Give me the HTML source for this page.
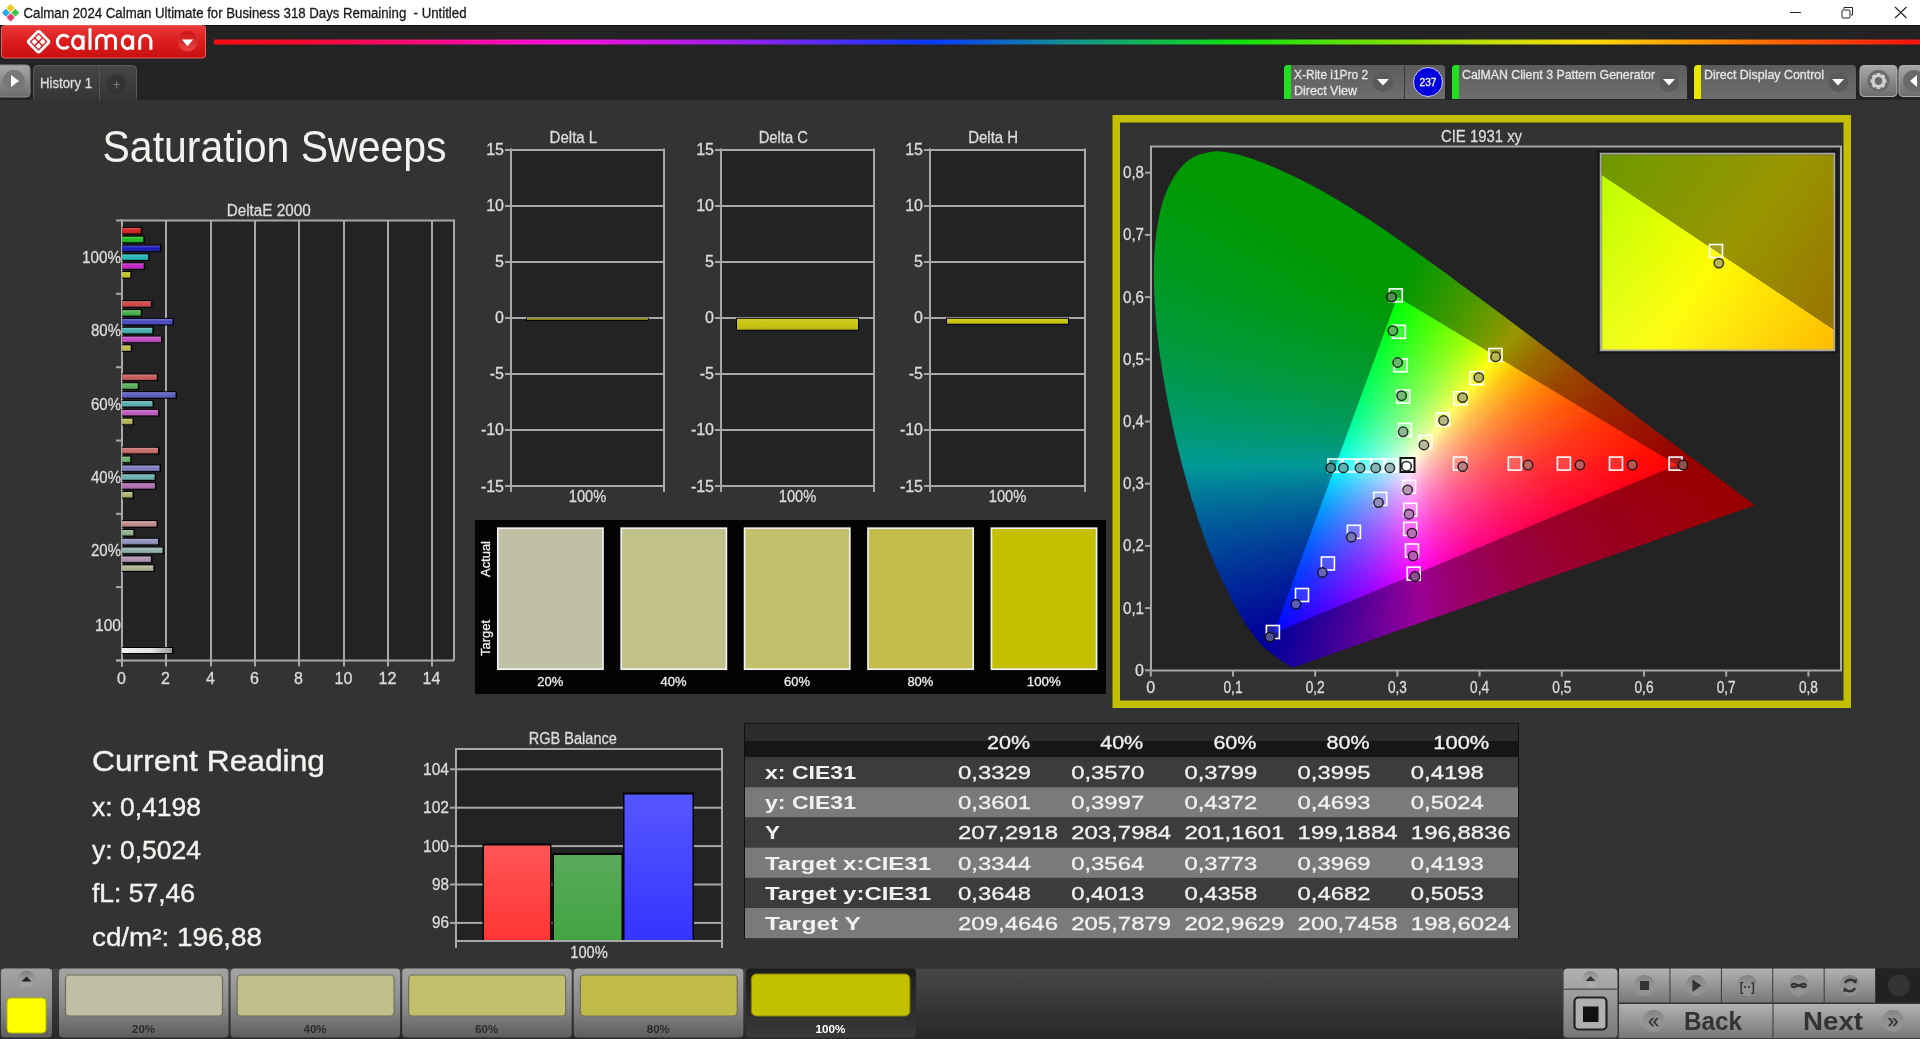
<!DOCTYPE html><html><head><meta charset="utf-8"><title>Calman</title><style>
html,body{margin:0;padding:0;background:#333;overflow:hidden;width:1920px;height:1039px;position:relative}
svg{position:absolute;left:0;top:0;font-family:"Liberation Sans", sans-serif;will-change:transform}
.L{position:absolute;left:0;top:0;width:1920px;height:1039px}
.r{position:absolute;height:3px}
</style></head><body>
<svg width="1920" height="1039" viewBox="0 0 1920 1039">
<defs>
<linearGradient id="rainbow" x1="0" x2="1" y1="0" y2="0"><stop offset="0" stop-color="#ff0a10"/><stop offset="0.06" stop-color="#ff0838"/><stop offset="0.2" stop-color="#ff10d8"/><stop offset="0.3" stop-color="#a020e8"/><stop offset="0.42" stop-color="#0838ff"/><stop offset="0.5" stop-color="#159090"/><stop offset="0.6" stop-color="#10e010"/><stop offset="0.73" stop-color="#b0e000"/><stop offset="0.81" stop-color="#ffd800"/><stop offset="0.89" stop-color="#ff8000"/><stop offset="1" stop-color="#ff1010"/></linearGradient>
<linearGradient id="redlogo" x1="0" x2="0" y1="0" y2="1"><stop offset="0" stop-color="#e83a3a"/><stop offset="0.5" stop-color="#dd1c1c"/><stop offset="1" stop-color="#c81010"/></linearGradient>
<linearGradient id="devbtn" x1="0" x2="0" y1="0" y2="1"><stop offset="0" stop-color="#5c5c5c"/><stop offset="1" stop-color="#6e6e6e"/></linearGradient>
<linearGradient id="gbtn" x1="0" x2="0" y1="0" y2="1"><stop offset="0" stop-color="#a8a8a8"/><stop offset="1" stop-color="#6c6c6c"/></linearGradient>
<linearGradient id="gbtn2" x1="0" x2="0" y1="0" y2="1"><stop offset="0" stop-color="#b4b4b4"/><stop offset="1" stop-color="#7a7a7a"/></linearGradient>
<linearGradient id="selbtn" x1="0" x2="0" y1="0" y2="1"><stop offset="0" stop-color="#1c1c1c"/><stop offset="1" stop-color="#3a3a3a"/></linearGradient>
<linearGradient id="barR" x1="0" x2="0" y1="0" y2="1"><stop offset="0" stop-color="#ff5656"/><stop offset="1" stop-color="#ff3434"/></linearGradient>
<linearGradient id="barG" x1="0" x2="0" y1="0" y2="1"><stop offset="0" stop-color="#5aaa5a"/><stop offset="1" stop-color="#42a442"/></linearGradient>
<linearGradient id="barB" x1="0" x2="0" y1="0" y2="1"><stop offset="0" stop-color="#5656ff"/><stop offset="1" stop-color="#3434ff"/></linearGradient>
<linearGradient id="shine" x1="0" x2="0" y1="0" y2="1"><stop offset="0" stop-color="#fff" stop-opacity="0.25"/><stop offset="0.5" stop-color="#fff" stop-opacity="0"/><stop offset="1" stop-color="#000" stop-opacity="0.25"/></linearGradient>
</defs>
<rect x="0" y="0" width="1920" height="25" fill="#ffffff"/>
<rect x="0" y="25" width="1920" height="75" fill="#232323"/>
<rect x="0" y="25" width="1920" height="1" fill="#101010"/>
<text x="23.5" y="18" font-size="14" fill="#1a1a1a" textLength="443" lengthAdjust="spacingAndGlyphs" stroke="#1a1a1a" stroke-width="0.3">Calman 2024 Calman Ultimate for Business 318 Days Remaining  - Untitled</text>
<g transform="translate(10.6,12.7) rotate(45)"><rect x="-6.2" y="-6.2" width="5.8" height="5.8" rx="0.8" fill="#f5c518"/><rect x="0.4" y="-6.2" width="5.8" height="5.8" rx="0.8" fill="#3cc84a"/><rect x="-6.2" y="0.4" width="5.8" height="5.8" rx="0.8" fill="#2aa6e8"/><rect x="0.4" y="0.4" width="5.8" height="5.8" rx="0.8" fill="#e8406e"/></g>
<rect x="1790" y="12" width="11" height="1" fill="#222"/>
<rect x="1842" y="10" width="8" height="8" fill="none" stroke="#222" stroke-width="1" rx="1"/>
<path d="M1844 9 V7.5 H1852.5 V15 H1851" fill="none" stroke="#222" stroke-width="1"/>
<path d="M1895 7 L1906.5 18 M1906.5 7 L1895 18" stroke="#222" stroke-width="1.1"/>
<rect x="1.5" y="25.5" width="204" height="32.5" rx="3" fill="url(#redlogo)" stroke="#e86060" stroke-width="1"/>
<g transform="translate(38.6,41.8) rotate(45)" fill="#fff"><rect x="-7.8" y="-7.8" width="15.6" height="15.6" rx="2.2" fill="none" stroke="#fff" stroke-width="2.8"/><rect x="-5.1" y="-5.1" width="4.4" height="4.4" rx="0.6"/><rect x="0.7" y="-5.1" width="4.4" height="4.4" rx="0.6"/><rect x="-5.1" y="0.7" width="4.4" height="4.4" rx="0.6"/><rect x="0.7" y="0.7" width="4.4" height="4.4" rx="0.6"/></g>
<g fill="none" stroke="#fff" stroke-width="3"><path d="M68.6 37.4 A6.5 6.5 0 1 0 68.6 46.2"/><ellipse cx="77.8" cy="42.3" rx="5.3" ry="6.4"/><path d="M83.1 35.6 V49.8"/><path d="M90 28.3 V49.8"/><path d="M96.6 49.8 V40.1 A4.72 4.72 0 0 1 106.05 40.1 V49.8 M106.05 40.1 A4.72 4.72 0 0 1 115.5 40.1 V49.8"/><ellipse cx="127.45" cy="42.3" rx="5.25" ry="6.4"/><path d="M132.7 35.6 V49.8"/><path d="M139.7 49.8 V41 A5.6 5.6 0 0 1 150.9 41 V49.8"/></g>
<linearGradient id="ddr" x1="0" x2="0" y1="0" y2="1"><stop offset="0" stop-color="#c81414"/><stop offset="1" stop-color="#e84444"/></linearGradient>
<circle cx="187.6" cy="41.3" r="10.2" fill="url(#ddr)"/>
<path d="M181.8 39.4 H193.2 L187.5 46.2 Z" fill="#fff"/>
<rect x="214" y="39.5" width="1706" height="5" fill="url(#rainbow)"/>
<rect x="-3" y="65" width="33" height="32" rx="4" fill="url(#gbtn)" stroke="#8a8a8a" stroke-width="1"/>
<circle cx="14" cy="81" r="11" fill="#777"/><path d="M11 75 L19 81 L11 87 Z" fill="#fff"/>
<linearGradient id="tabg" x1="0" x2="0" y1="0" y2="1"><stop offset="0" stop-color="#464646"/><stop offset="1" stop-color="#343434"/></linearGradient>
<rect x="33.5" y="65.5" width="103" height="36" rx="4" fill="url(#tabg)" stroke="#5a5a5a"/>
<rect x="99" y="66" width="1" height="34" fill="#555"/>
<text x="40" y="88" font-size="14" fill="#dddddd" textLength="52" lengthAdjust="spacingAndGlyphs" stroke="#dddddd" stroke-width="0.3">History 1</text>
<circle cx="116.5" cy="84.5" r="10" fill="#333"/>
<text x="116.5" y="89" font-size="13" fill="#777" text-anchor="middle" stroke="#777" stroke-width="0.3">+</text>
<path d="M1284 99 V69 Q1284 65 1288 65 H1441 Q1445 65 1445 69 V99 Z" fill="url(#devbtn)"/>
<path d="M1284 99 V69 Q1284 65 1288 65 H1291 V99 Z" fill="#22dd22"/>
<text x="1294" y="78.5" font-size="12.5" fill="#e6e6e6" textLength="74" lengthAdjust="spacingAndGlyphs" stroke="#e6e6e6" stroke-width="0.3">X-Rite i1Pro 2</text>
<text x="1294" y="94.5" font-size="12.5" fill="#e6e6e6" textLength="63" lengthAdjust="spacingAndGlyphs" stroke="#e6e6e6" stroke-width="0.3">Direct View</text>
<circle cx="1383" cy="82" r="10" fill="#5a5a5a"/>
<path d="M1377 79 H1389 L1383 85.5 Z" fill="#fff"/>
<rect x="1404" y="66" width="1" height="33" fill="#3a3a3a"/>
<circle cx="1428" cy="82" r="14.5" fill="#0000dd" stroke="#d0d0ff" stroke-width="1"/>
<text x="1428" y="86.2" font-size="11.5" fill="#ffffff" text-anchor="middle" textLength="17" lengthAdjust="spacingAndGlyphs" stroke="#ffffff" stroke-width="0.3">237</text>
<path d="M1452 99 V69 Q1452 65 1456 65 H1683 Q1687 65 1687 69 V99 Z" fill="url(#devbtn)"/>
<path d="M1452 99 V69 Q1452 65 1456 65 H1459 V99 Z" fill="#22dd22"/>
<text x="1462" y="78.5" font-size="12.5" fill="#e6e6e6" textLength="193" lengthAdjust="spacingAndGlyphs" stroke="#e6e6e6" stroke-width="0.3">CalMAN Client 3 Pattern Generator</text>
<circle cx="1669" cy="82" r="10" fill="#5a5a5a"/>
<path d="M1663 79 H1675 L1669 85.5 Z" fill="#fff"/>
<path d="M1694 99 V69 Q1694 65 1698 65 H1852 Q1856 65 1856 69 V99 Z" fill="url(#devbtn)"/>
<path d="M1694 99 V69 Q1694 65 1698 65 H1701 V99 Z" fill="#e8e800"/>
<text x="1704" y="78.5" font-size="12.5" fill="#e6e6e6" textLength="120" lengthAdjust="spacingAndGlyphs" stroke="#e6e6e6" stroke-width="0.3">Direct Display Control</text>
<circle cx="1838" cy="82" r="10" fill="#5a5a5a"/>
<path d="M1832 79 H1844 L1838 85.5 Z" fill="#fff"/>
<rect x="1860" y="65.5" width="37" height="31" rx="4" fill="url(#gbtn)" stroke="#b0b0b0" stroke-width="1"/>
<circle cx="1878.5" cy="81" r="11" fill="#6a6a6a"/>
<g transform="translate(1878.5,81)" fill="#d0d0d0"><rect x="-1.8" y="-8" width="3.6" height="4" transform="rotate(0)"/><rect x="-1.8" y="-8" width="3.6" height="4" transform="rotate(45)"/><rect x="-1.8" y="-8" width="3.6" height="4" transform="rotate(90)"/><rect x="-1.8" y="-8" width="3.6" height="4" transform="rotate(135)"/><rect x="-1.8" y="-8" width="3.6" height="4" transform="rotate(180)"/><rect x="-1.8" y="-8" width="3.6" height="4" transform="rotate(225)"/><rect x="-1.8" y="-8" width="3.6" height="4" transform="rotate(270)"/><rect x="-1.8" y="-8" width="3.6" height="4" transform="rotate(315)"/><circle r="5.5" fill="none" stroke="#d0d0d0" stroke-width="3"/></g>
<rect x="1899" y="65.5" width="30" height="31" rx="4" fill="url(#gbtn)" stroke="#b0b0b0" stroke-width="1"/>
<circle cx="1914" cy="81" r="11" fill="#6a6a6a"/><path d="M1917 75 L1910 81 L1917 87 Z" fill="#fff"/>
<rect x="0" y="100" width="1920" height="868" fill="#333333"/>
<text x="102.5" y="162" font-size="44" fill="#f4f2ee" textLength="344" lengthAdjust="spacingAndGlyphs">Saturation Sweeps</text>
<rect x="122" y="220.5" width="332" height="440.0" fill="#232323"/>
<rect x="165" y="220.5" width="2" height="440.0" fill="#a8a8a8"/>
<rect x="210" y="220.5" width="2" height="440.0" fill="#a8a8a8"/>
<rect x="254" y="220.5" width="2" height="440.0" fill="#a8a8a8"/>
<rect x="298" y="220.5" width="2" height="440.0" fill="#a8a8a8"/>
<rect x="343" y="220.5" width="2" height="440.0" fill="#a8a8a8"/>
<rect x="387" y="220.5" width="2" height="440.0" fill="#a8a8a8"/>
<rect x="431" y="220.5" width="2" height="440.0" fill="#a8a8a8"/>
<rect x="121" y="219.5" width="333" height="2" fill="#a8a8a8"/>
<rect x="453" y="219.5" width="2" height="441.0" fill="#a8a8a8"/>
<rect x="121" y="219.5" width="2" height="447.0" fill="#a8a8a8"/>
<rect x="116" y="659.5" width="338" height="2" fill="#a8a8a8"/>
<rect x="116" y="219.5" width="6" height="2" fill="#a8a8a8"/>
<rect x="116" y="292.8" width="6" height="2" fill="#a8a8a8"/>
<rect x="116" y="366.2" width="6" height="2" fill="#a8a8a8"/>
<rect x="116" y="439.5" width="6" height="2" fill="#a8a8a8"/>
<rect x="116" y="512.8" width="6" height="2" fill="#a8a8a8"/>
<rect x="116" y="586.1" width="6" height="2" fill="#a8a8a8"/>
<rect x="116" y="659.5" width="6" height="2" fill="#a8a8a8"/>
<rect x="121" y="660.5" width="2" height="6" fill="#a8a8a8"/>
<text x="121.5" y="683.5" font-size="16" fill="#dcdcdc" text-anchor="middle" stroke="#dcdcdc" stroke-width="0.3">0</text>
<rect x="165" y="660.5" width="2" height="6" fill="#a8a8a8"/>
<text x="165.5" y="683.5" font-size="16" fill="#dcdcdc" text-anchor="middle" stroke="#dcdcdc" stroke-width="0.3">2</text>
<rect x="210" y="660.5" width="2" height="6" fill="#a8a8a8"/>
<text x="210.5" y="683.5" font-size="16" fill="#dcdcdc" text-anchor="middle" stroke="#dcdcdc" stroke-width="0.3">4</text>
<rect x="254" y="660.5" width="2" height="6" fill="#a8a8a8"/>
<text x="254.5" y="683.5" font-size="16" fill="#dcdcdc" text-anchor="middle" stroke="#dcdcdc" stroke-width="0.3">6</text>
<rect x="298" y="660.5" width="2" height="6" fill="#a8a8a8"/>
<text x="298.5" y="683.5" font-size="16" fill="#dcdcdc" text-anchor="middle" stroke="#dcdcdc" stroke-width="0.3">8</text>
<rect x="343" y="660.5" width="2" height="6" fill="#a8a8a8"/>
<text x="343.5" y="683.5" font-size="16" fill="#dcdcdc" text-anchor="middle" stroke="#dcdcdc" stroke-width="0.3">10</text>
<rect x="387" y="660.5" width="2" height="6" fill="#a8a8a8"/>
<text x="387.5" y="683.5" font-size="16" fill="#dcdcdc" text-anchor="middle" stroke="#dcdcdc" stroke-width="0.3">12</text>
<rect x="431" y="660.5" width="2" height="6" fill="#a8a8a8"/>
<text x="431.5" y="683.5" font-size="16" fill="#dcdcdc" text-anchor="middle" stroke="#dcdcdc" stroke-width="0.3">14</text>
<text x="268.7" y="215.5" font-size="16" fill="#dcdcdc" text-anchor="middle" textLength="84" lengthAdjust="spacingAndGlyphs" stroke="#dcdcdc" stroke-width="0.3">DeltaE 2000</text>
<text x="121" y="263.0" font-size="16" fill="#dcdcdc" text-anchor="end" textLength="39" lengthAdjust="spacingAndGlyphs" stroke="#dcdcdc" stroke-width="0.3">100%</text>
<text x="121" y="336.3" font-size="16" fill="#dcdcdc" text-anchor="end" textLength="30" lengthAdjust="spacingAndGlyphs" stroke="#dcdcdc" stroke-width="0.3">80%</text>
<text x="121" y="409.6" font-size="16" fill="#dcdcdc" text-anchor="end" textLength="30" lengthAdjust="spacingAndGlyphs" stroke="#dcdcdc" stroke-width="0.3">60%</text>
<text x="121" y="482.9" font-size="16" fill="#dcdcdc" text-anchor="end" textLength="30" lengthAdjust="spacingAndGlyphs" stroke="#dcdcdc" stroke-width="0.3">40%</text>
<text x="121" y="556.2" font-size="16" fill="#dcdcdc" text-anchor="end" textLength="30" lengthAdjust="spacingAndGlyphs" stroke="#dcdcdc" stroke-width="0.3">20%</text>
<text x="121" y="631" font-size="16" fill="#dcdcdc" text-anchor="end" textLength="26" lengthAdjust="spacingAndGlyphs" stroke="#dcdcdc" stroke-width="0.3">100</text>
<rect x="122" y="226.9" width="20.3" height="7.6" fill="#000"/>
<rect x="122" y="227.9" width="18.8" height="5.6" fill="#d02020"/>
<rect x="122" y="227.9" width="18.8" height="5.6" fill="url(#shine)"/>
<rect x="122" y="235.7" width="22.8" height="7.6" fill="#000"/>
<rect x="122" y="236.7" width="21.3" height="5.6" fill="#20bb20"/>
<rect x="122" y="236.7" width="21.3" height="5.6" fill="url(#shine)"/>
<rect x="122" y="244.6" width="39.6" height="7.6" fill="#000"/>
<rect x="122" y="245.6" width="38.1" height="5.6" fill="#1818b8"/>
<rect x="122" y="245.6" width="38.1" height="5.6" fill="url(#shine)"/>
<rect x="122" y="253.4" width="27.6" height="7.6" fill="#000"/>
<rect x="122" y="254.4" width="26.1" height="5.6" fill="#20b4b4"/>
<rect x="122" y="254.4" width="26.1" height="5.6" fill="url(#shine)"/>
<rect x="122" y="262.3" width="23.2" height="7.6" fill="#000"/>
<rect x="122" y="263.3" width="21.7" height="5.6" fill="#c420c4"/>
<rect x="122" y="263.3" width="21.7" height="5.6" fill="url(#shine)"/>
<rect x="122" y="271.1" width="9.8" height="7.6" fill="#000"/>
<rect x="122" y="272.1" width="8.3" height="5.6" fill="#c4c420"/>
<rect x="122" y="272.1" width="8.3" height="5.6" fill="url(#shine)"/>
<rect x="122" y="300.2" width="30.4" height="7.6" fill="#000"/>
<rect x="122" y="301.2" width="28.9" height="5.6" fill="#cc4444"/>
<rect x="122" y="301.2" width="28.9" height="5.6" fill="url(#shine)"/>
<rect x="122" y="309.1" width="20.3" height="7.6" fill="#000"/>
<rect x="122" y="310.1" width="18.8" height="5.6" fill="#44b044"/>
<rect x="122" y="310.1" width="18.8" height="5.6" fill="url(#shine)"/>
<rect x="122" y="317.9" width="52.0" height="7.6" fill="#000"/>
<rect x="122" y="318.9" width="50.5" height="5.6" fill="#4848c0"/>
<rect x="122" y="318.9" width="50.5" height="5.6" fill="url(#shine)"/>
<rect x="122" y="326.8" width="31.8" height="7.6" fill="#000"/>
<rect x="122" y="327.8" width="30.3" height="5.6" fill="#44b0b0"/>
<rect x="122" y="327.8" width="30.3" height="5.6" fill="url(#shine)"/>
<rect x="122" y="335.6" width="40.5" height="7.6" fill="#000"/>
<rect x="122" y="336.6" width="39.0" height="5.6" fill="#c048c0"/>
<rect x="122" y="336.6" width="39.0" height="5.6" fill="url(#shine)"/>
<rect x="122" y="344.4" width="10.2" height="7.6" fill="#000"/>
<rect x="122" y="345.4" width="8.7" height="5.6" fill="#b8b848"/>
<rect x="122" y="345.4" width="8.7" height="5.6" fill="url(#shine)"/>
<rect x="122" y="373.5" width="36.2" height="7.6" fill="#000"/>
<rect x="122" y="374.5" width="34.7" height="5.6" fill="#c85858"/>
<rect x="122" y="374.5" width="34.7" height="5.6" fill="url(#shine)"/>
<rect x="122" y="382.3" width="17.2" height="7.6" fill="#000"/>
<rect x="122" y="383.3" width="15.7" height="5.6" fill="#58b058"/>
<rect x="122" y="383.3" width="15.7" height="5.6" fill="url(#shine)"/>
<rect x="122" y="391.2" width="55.0" height="7.6" fill="#000"/>
<rect x="122" y="392.2" width="53.5" height="5.6" fill="#5a5ac0"/>
<rect x="122" y="392.2" width="53.5" height="5.6" fill="url(#shine)"/>
<rect x="122" y="400.0" width="32.0" height="7.6" fill="#000"/>
<rect x="122" y="401.0" width="30.5" height="5.6" fill="#58b0b0"/>
<rect x="122" y="401.0" width="30.5" height="5.6" fill="url(#shine)"/>
<rect x="122" y="408.9" width="37.5" height="7.6" fill="#000"/>
<rect x="122" y="409.9" width="36.0" height="5.6" fill="#c058c0"/>
<rect x="122" y="409.9" width="36.0" height="5.6" fill="url(#shine)"/>
<rect x="122" y="417.7" width="12.0" height="7.6" fill="#000"/>
<rect x="122" y="418.7" width="10.5" height="5.6" fill="#b4b458"/>
<rect x="122" y="418.7" width="10.5" height="5.6" fill="url(#shine)"/>
<rect x="122" y="446.8" width="37.5" height="7.6" fill="#000"/>
<rect x="122" y="447.8" width="36.0" height="5.6" fill="#c86a6a"/>
<rect x="122" y="447.8" width="36.0" height="5.6" fill="url(#shine)"/>
<rect x="122" y="455.6" width="9.8" height="7.6" fill="#000"/>
<rect x="122" y="456.6" width="8.3" height="5.6" fill="#6ab06a"/>
<rect x="122" y="456.6" width="8.3" height="5.6" fill="url(#shine)"/>
<rect x="122" y="464.5" width="39.0" height="7.6" fill="#000"/>
<rect x="122" y="465.5" width="37.5" height="5.6" fill="#7a7ac0"/>
<rect x="122" y="465.5" width="37.5" height="5.6" fill="url(#shine)"/>
<rect x="122" y="473.3" width="34.1" height="7.6" fill="#000"/>
<rect x="122" y="474.3" width="32.6" height="5.6" fill="#6ab0b0"/>
<rect x="122" y="474.3" width="32.6" height="5.6" fill="url(#shine)"/>
<rect x="122" y="482.2" width="34.4" height="7.6" fill="#000"/>
<rect x="122" y="483.2" width="32.9" height="5.6" fill="#b06ab0"/>
<rect x="122" y="483.2" width="32.9" height="5.6" fill="url(#shine)"/>
<rect x="122" y="491.0" width="12.0" height="7.6" fill="#000"/>
<rect x="122" y="492.0" width="10.5" height="5.6" fill="#b0b070"/>
<rect x="122" y="492.0" width="10.5" height="5.6" fill="url(#shine)"/>
<rect x="122" y="520.1" width="36.0" height="7.6" fill="#000"/>
<rect x="122" y="521.1" width="34.5" height="5.6" fill="#c08a8a"/>
<rect x="122" y="521.1" width="34.5" height="5.6" fill="url(#shine)"/>
<rect x="122" y="529.0" width="12.9" height="7.6" fill="#000"/>
<rect x="122" y="530.0" width="11.4" height="5.6" fill="#8ab08a"/>
<rect x="122" y="530.0" width="11.4" height="5.6" fill="url(#shine)"/>
<rect x="122" y="537.8" width="37.5" height="7.6" fill="#000"/>
<rect x="122" y="538.8" width="36.0" height="5.6" fill="#9090c0"/>
<rect x="122" y="538.8" width="36.0" height="5.6" fill="url(#shine)"/>
<rect x="122" y="546.6" width="42.1" height="7.6" fill="#000"/>
<rect x="122" y="547.6" width="40.6" height="5.6" fill="#90b0b0"/>
<rect x="122" y="547.6" width="40.6" height="5.6" fill="url(#shine)"/>
<rect x="122" y="555.5" width="30.4" height="7.6" fill="#000"/>
<rect x="122" y="556.5" width="28.9" height="5.6" fill="#b090b0"/>
<rect x="122" y="556.5" width="28.9" height="5.6" fill="url(#shine)"/>
<rect x="122" y="564.4" width="32.9" height="7.6" fill="#000"/>
<rect x="122" y="565.4" width="31.4" height="5.6" fill="#b0b090"/>
<rect x="122" y="565.4" width="31.4" height="5.6" fill="url(#shine)"/>
<rect x="122" y="647" width="51.5" height="7" fill="#000"/>
<linearGradient id="grayb" x1="0" x2="1"><stop offset="0" stop-color="#f0f0f0"/><stop offset="0.6" stop-color="#e0e0e0"/><stop offset="1" stop-color="#9a9a9a"/></linearGradient>
<rect x="122" y="648" width="50" height="5" fill="url(#grayb)"/>
<rect x="511" y="149.5" width="153" height="336.5" fill="#232323"/>
<rect x="505" y="149" width="160" height="2" fill="#a8a8a8"/>
<text x="504" y="155.0" font-size="16" fill="#dcdcdc" text-anchor="end" stroke="#dcdcdc" stroke-width="0.3">15</text>
<rect x="505" y="205" width="160" height="2" fill="#a8a8a8"/>
<text x="504" y="211.08333333333334" font-size="16" fill="#dcdcdc" text-anchor="end" stroke="#dcdcdc" stroke-width="0.3">10</text>
<rect x="505" y="261" width="160" height="2" fill="#a8a8a8"/>
<text x="504" y="267.1666666666667" font-size="16" fill="#dcdcdc" text-anchor="end" stroke="#dcdcdc" stroke-width="0.3">5</text>
<rect x="505" y="317" width="160" height="2" fill="#a8a8a8"/>
<text x="504" y="323.25" font-size="16" fill="#dcdcdc" text-anchor="end" stroke="#dcdcdc" stroke-width="0.3">0</text>
<rect x="505" y="373" width="160" height="2" fill="#a8a8a8"/>
<text x="504" y="379.33333333333337" font-size="16" fill="#dcdcdc" text-anchor="end" stroke="#dcdcdc" stroke-width="0.3">-5</text>
<rect x="505" y="429" width="160" height="2" fill="#a8a8a8"/>
<text x="504" y="435.4166666666667" font-size="16" fill="#dcdcdc" text-anchor="end" stroke="#dcdcdc" stroke-width="0.3">-10</text>
<rect x="505" y="485" width="160" height="2" fill="#a8a8a8"/>
<text x="504" y="491.5" font-size="16" fill="#dcdcdc" text-anchor="end" stroke="#dcdcdc" stroke-width="0.3">-15</text>
<rect x="510" y="148.5" width="2" height="343.5" fill="#a8a8a8"/>
<rect x="663" y="148.5" width="2" height="343.5" fill="#a8a8a8"/>
<text x="573.4" y="143" font-size="16" fill="#dcdcdc" text-anchor="middle" textLength="47.6" lengthAdjust="spacingAndGlyphs" stroke="#dcdcdc" stroke-width="0.3">Delta L</text>
<text x="587.5" y="501.5" font-size="16" fill="#dcdcdc" text-anchor="middle" textLength="37.5" lengthAdjust="spacingAndGlyphs" stroke="#dcdcdc" stroke-width="0.3">100%</text>
<rect x="526" y="317.8" width="123" height="3" fill="#000"/>
<rect x="527" y="318.2" width="121" height="1.5" fill="#b8b820"/>
<rect x="721" y="149.5" width="153" height="336.5" fill="#232323"/>
<rect x="715" y="149" width="160" height="2" fill="#a8a8a8"/>
<text x="714" y="155.0" font-size="16" fill="#dcdcdc" text-anchor="end" stroke="#dcdcdc" stroke-width="0.3">15</text>
<rect x="715" y="205" width="160" height="2" fill="#a8a8a8"/>
<text x="714" y="211.08333333333334" font-size="16" fill="#dcdcdc" text-anchor="end" stroke="#dcdcdc" stroke-width="0.3">10</text>
<rect x="715" y="261" width="160" height="2" fill="#a8a8a8"/>
<text x="714" y="267.1666666666667" font-size="16" fill="#dcdcdc" text-anchor="end" stroke="#dcdcdc" stroke-width="0.3">5</text>
<rect x="715" y="317" width="160" height="2" fill="#a8a8a8"/>
<text x="714" y="323.25" font-size="16" fill="#dcdcdc" text-anchor="end" stroke="#dcdcdc" stroke-width="0.3">0</text>
<rect x="715" y="373" width="160" height="2" fill="#a8a8a8"/>
<text x="714" y="379.33333333333337" font-size="16" fill="#dcdcdc" text-anchor="end" stroke="#dcdcdc" stroke-width="0.3">-5</text>
<rect x="715" y="429" width="160" height="2" fill="#a8a8a8"/>
<text x="714" y="435.4166666666667" font-size="16" fill="#dcdcdc" text-anchor="end" stroke="#dcdcdc" stroke-width="0.3">-10</text>
<rect x="715" y="485" width="160" height="2" fill="#a8a8a8"/>
<text x="714" y="491.5" font-size="16" fill="#dcdcdc" text-anchor="end" stroke="#dcdcdc" stroke-width="0.3">-15</text>
<rect x="720" y="148.5" width="2" height="343.5" fill="#a8a8a8"/>
<rect x="873" y="148.5" width="2" height="343.5" fill="#a8a8a8"/>
<text x="783.3" y="143" font-size="16" fill="#dcdcdc" text-anchor="middle" textLength="49.3" lengthAdjust="spacingAndGlyphs" stroke="#dcdcdc" stroke-width="0.3">Delta C</text>
<text x="797.5" y="501.5" font-size="16" fill="#dcdcdc" text-anchor="middle" textLength="37.5" lengthAdjust="spacingAndGlyphs" stroke="#dcdcdc" stroke-width="0.3">100%</text>
<rect x="736" y="317.8" width="123" height="13" fill="#000"/>
<rect x="737" y="318.8" width="121" height="11" fill="#c8c40c"/>
<rect x="737" y="318.8" width="121" height="11" fill="url(#shine)" opacity="0.6"/>
<rect x="930" y="149.5" width="155" height="336.5" fill="#232323"/>
<rect x="924" y="149" width="162" height="2" fill="#a8a8a8"/>
<text x="923" y="155.0" font-size="16" fill="#dcdcdc" text-anchor="end" stroke="#dcdcdc" stroke-width="0.3">15</text>
<rect x="924" y="205" width="162" height="2" fill="#a8a8a8"/>
<text x="923" y="211.08333333333334" font-size="16" fill="#dcdcdc" text-anchor="end" stroke="#dcdcdc" stroke-width="0.3">10</text>
<rect x="924" y="261" width="162" height="2" fill="#a8a8a8"/>
<text x="923" y="267.1666666666667" font-size="16" fill="#dcdcdc" text-anchor="end" stroke="#dcdcdc" stroke-width="0.3">5</text>
<rect x="924" y="317" width="162" height="2" fill="#a8a8a8"/>
<text x="923" y="323.25" font-size="16" fill="#dcdcdc" text-anchor="end" stroke="#dcdcdc" stroke-width="0.3">0</text>
<rect x="924" y="373" width="162" height="2" fill="#a8a8a8"/>
<text x="923" y="379.33333333333337" font-size="16" fill="#dcdcdc" text-anchor="end" stroke="#dcdcdc" stroke-width="0.3">-5</text>
<rect x="924" y="429" width="162" height="2" fill="#a8a8a8"/>
<text x="923" y="435.4166666666667" font-size="16" fill="#dcdcdc" text-anchor="end" stroke="#dcdcdc" stroke-width="0.3">-10</text>
<rect x="924" y="485" width="162" height="2" fill="#a8a8a8"/>
<text x="923" y="491.5" font-size="16" fill="#dcdcdc" text-anchor="end" stroke="#dcdcdc" stroke-width="0.3">-15</text>
<rect x="929" y="148.5" width="2" height="343.5" fill="#a8a8a8"/>
<rect x="1084" y="148.5" width="2" height="343.5" fill="#a8a8a8"/>
<text x="993.2" y="143" font-size="16" fill="#dcdcdc" text-anchor="middle" textLength="50" lengthAdjust="spacingAndGlyphs" stroke="#dcdcdc" stroke-width="0.3">Delta H</text>
<text x="1007.5" y="501.5" font-size="16" fill="#dcdcdc" text-anchor="middle" textLength="37.5" lengthAdjust="spacingAndGlyphs" stroke="#dcdcdc" stroke-width="0.3">100%</text>
<rect x="946" y="317.8" width="123" height="7" fill="#000"/>
<rect x="947" y="318.8" width="121" height="5" fill="#c8c40c"/>
<rect x="947" y="318.8" width="121" height="5" fill="url(#shine)" opacity="0.6"/>
<rect x="475" y="520" width="631" height="174" fill="#030303"/>
<rect x="497.8" y="528.2" width="105.2" height="141" fill="#c0c0a4" stroke="#f0f0f0" stroke-width="1.7"/>
<text x="550.2" y="686" font-size="13" fill="#f0f0f0" text-anchor="middle" textLength="26" lengthAdjust="spacingAndGlyphs" stroke="#f0f0f0" stroke-width="0.3">20%</text>
<rect x="621.2" y="528.2" width="105.2" height="141" fill="#c1c18a" stroke="#f0f0f0" stroke-width="1.7"/>
<text x="673.6" y="686" font-size="13" fill="#f0f0f0" text-anchor="middle" textLength="26" lengthAdjust="spacingAndGlyphs" stroke="#f0f0f0" stroke-width="0.3">40%</text>
<rect x="744.6" y="528.2" width="105.2" height="141" fill="#c3c16c" stroke="#f0f0f0" stroke-width="1.7"/>
<text x="797.0" y="686" font-size="13" fill="#f0f0f0" text-anchor="middle" textLength="26" lengthAdjust="spacingAndGlyphs" stroke="#f0f0f0" stroke-width="0.3">60%</text>
<rect x="868.0" y="528.2" width="105.2" height="141" fill="#c2bd4c" stroke="#f0f0f0" stroke-width="1.7"/>
<text x="920.4000000000001" y="686" font-size="13" fill="#f0f0f0" text-anchor="middle" textLength="26" lengthAdjust="spacingAndGlyphs" stroke="#f0f0f0" stroke-width="0.3">80%</text>
<rect x="991.4" y="528.2" width="105.2" height="141" fill="#c4c000" stroke="#f0f0f0" stroke-width="1.7"/>
<text x="1043.8" y="686" font-size="13" fill="#f0f0f0" text-anchor="middle" textLength="34" lengthAdjust="spacingAndGlyphs" stroke="#f0f0f0" stroke-width="0.3">100%</text>
<g transform="translate(490,559) rotate(-90)"><text x="0" y="0" font-size="13" fill="#f0f0f0" text-anchor="middle" textLength="36" lengthAdjust="spacingAndGlyphs" stroke="#f0f0f0" stroke-width="0.3">Actual</text></g>
<g transform="translate(490,638) rotate(-90)"><text x="0" y="0" font-size="13" fill="#f0f0f0" text-anchor="middle" textLength="36" lengthAdjust="spacingAndGlyphs" stroke="#f0f0f0" stroke-width="0.3">Target</text></g>
<text x="92" y="770.5" font-size="30" fill="#f4f2ee" textLength="233" lengthAdjust="spacingAndGlyphs" stroke="#f4f2ee" stroke-width="0.4">Current Reading</text>
<text x="92" y="815.5" font-size="26" fill="#f4f2ee" textLength="109" lengthAdjust="spacingAndGlyphs" stroke="#f4f2ee" stroke-width="0.4">x: 0,4198</text>
<text x="92" y="858.9" font-size="26" fill="#f4f2ee" textLength="109" lengthAdjust="spacingAndGlyphs" stroke="#f4f2ee" stroke-width="0.4">y: 0,5024</text>
<text x="92" y="902.3" font-size="26" fill="#f4f2ee" textLength="103" lengthAdjust="spacingAndGlyphs" stroke="#f4f2ee" stroke-width="0.4">fL: 57,46</text>
<text x="92" y="945.7" font-size="26" fill="#f4f2ee" textLength="170" lengthAdjust="spacingAndGlyphs" stroke="#f4f2ee" stroke-width="0.4">cd/m²: 196,88</text>
<rect x="456" y="749" width="266" height="192" fill="#232323"/>
<rect x="450" y="768.3" width="273" height="2" fill="#a8a8a8"/>
<text x="449" y="774.8" font-size="16" fill="#dcdcdc" text-anchor="end" textLength="26" lengthAdjust="spacingAndGlyphs" stroke="#dcdcdc" stroke-width="0.3">104</text>
<rect x="450" y="806.7" width="273" height="2" fill="#a8a8a8"/>
<text x="449" y="813.1999999999999" font-size="16" fill="#dcdcdc" text-anchor="end" textLength="26" lengthAdjust="spacingAndGlyphs" stroke="#dcdcdc" stroke-width="0.3">102</text>
<rect x="450" y="845.1" width="273" height="2" fill="#a8a8a8"/>
<text x="449" y="851.5999999999999" font-size="16" fill="#dcdcdc" text-anchor="end" textLength="26" lengthAdjust="spacingAndGlyphs" stroke="#dcdcdc" stroke-width="0.3">100</text>
<rect x="450" y="883.5" width="273" height="2" fill="#a8a8a8"/>
<text x="449" y="890.0" font-size="16" fill="#dcdcdc" text-anchor="end" textLength="17" lengthAdjust="spacingAndGlyphs" stroke="#dcdcdc" stroke-width="0.3">98</text>
<rect x="450" y="921.9" width="273" height="2" fill="#a8a8a8"/>
<text x="449" y="928.4" font-size="16" fill="#dcdcdc" text-anchor="end" textLength="17" lengthAdjust="spacingAndGlyphs" stroke="#dcdcdc" stroke-width="0.3">96</text>
<rect x="455" y="748" width="267" height="2" fill="#a8a8a8"/>
<rect x="455" y="748" width="2" height="200" fill="#a8a8a8"/>
<rect x="721" y="748" width="2" height="200" fill="#a8a8a8"/>
<rect x="455" y="940" width="267" height="2" fill="#a8a8a8"/>
<rect x="482.5" y="843.5" width="69.0" height="96.5" fill="#000"/>
<rect x="484.0" y="845.5" width="66.0" height="94.5" fill="url(#barR)"/>
<rect x="552.5" y="853" width="70.5" height="87" fill="#000"/>
<rect x="554.0" y="855" width="67.5" height="85" fill="url(#barG)"/>
<rect x="623" y="792.5" width="71" height="147.5" fill="#000"/>
<rect x="624.5" y="794.5" width="68" height="145.5" fill="url(#barB)"/>
<text x="572.8" y="744" font-size="16" fill="#dcdcdc" text-anchor="middle" textLength="88" lengthAdjust="spacingAndGlyphs" stroke="#dcdcdc" stroke-width="0.3">RGB Balance</text>
<text x="589" y="958" font-size="16" fill="#dcdcdc" text-anchor="middle" textLength="37.5" lengthAdjust="spacingAndGlyphs" stroke="#dcdcdc" stroke-width="0.3">100%</text>
<rect x="744" y="723" width="775" height="216" fill="#111"/>
<rect x="745" y="724" width="773" height="17" fill="#2c2c2c"/>
<rect x="745" y="741" width="773" height="16" fill="#161616"/>
<rect x="745" y="757.0" width="773" height="30.4" fill="#3c3c3c"/>
<text x="765" y="779.0" font-size="19" fill="#f2f2f2" textLength="91" lengthAdjust="spacingAndGlyphs" font-weight="bold">x: CIE31</text>
<text x="958.0" y="779.0" font-size="19" fill="#f2f2f2" textLength="73" lengthAdjust="spacingAndGlyphs" stroke="#f2f2f2" stroke-width="0.3">0,3329</text>
<text x="1071.2" y="779.0" font-size="19" fill="#f2f2f2" textLength="73" lengthAdjust="spacingAndGlyphs" stroke="#f2f2f2" stroke-width="0.3">0,3570</text>
<text x="1184.4" y="779.0" font-size="19" fill="#f2f2f2" textLength="73" lengthAdjust="spacingAndGlyphs" stroke="#f2f2f2" stroke-width="0.3">0,3799</text>
<text x="1297.6" y="779.0" font-size="19" fill="#f2f2f2" textLength="73" lengthAdjust="spacingAndGlyphs" stroke="#f2f2f2" stroke-width="0.3">0,3995</text>
<text x="1410.8" y="779.0" font-size="19" fill="#f2f2f2" textLength="73" lengthAdjust="spacingAndGlyphs" stroke="#f2f2f2" stroke-width="0.3">0,4198</text>
<rect x="745" y="787.2" width="773" height="30.4" fill="#7a7a7a"/>
<text x="765" y="809.2" font-size="19" fill="#f2f2f2" textLength="91" lengthAdjust="spacingAndGlyphs" font-weight="bold">y: CIE31</text>
<text x="958.0" y="809.2" font-size="19" fill="#f2f2f2" textLength="73" lengthAdjust="spacingAndGlyphs" stroke="#f2f2f2" stroke-width="0.3">0,3601</text>
<text x="1071.2" y="809.2" font-size="19" fill="#f2f2f2" textLength="73" lengthAdjust="spacingAndGlyphs" stroke="#f2f2f2" stroke-width="0.3">0,3997</text>
<text x="1184.4" y="809.2" font-size="19" fill="#f2f2f2" textLength="73" lengthAdjust="spacingAndGlyphs" stroke="#f2f2f2" stroke-width="0.3">0,4372</text>
<text x="1297.6" y="809.2" font-size="19" fill="#f2f2f2" textLength="73" lengthAdjust="spacingAndGlyphs" stroke="#f2f2f2" stroke-width="0.3">0,4693</text>
<text x="1410.8" y="809.2" font-size="19" fill="#f2f2f2" textLength="73" lengthAdjust="spacingAndGlyphs" stroke="#f2f2f2" stroke-width="0.3">0,5024</text>
<rect x="745" y="817.4" width="773" height="30.4" fill="#3c3c3c"/>
<text x="765" y="839.4" font-size="19" fill="#f2f2f2" textLength="15" lengthAdjust="spacingAndGlyphs" font-weight="bold">Y</text>
<text x="958.0" y="839.4" font-size="19" fill="#f2f2f2" textLength="100" lengthAdjust="spacingAndGlyphs" stroke="#f2f2f2" stroke-width="0.3">207,2918</text>
<text x="1071.2" y="839.4" font-size="19" fill="#f2f2f2" textLength="100" lengthAdjust="spacingAndGlyphs" stroke="#f2f2f2" stroke-width="0.3">203,7984</text>
<text x="1184.4" y="839.4" font-size="19" fill="#f2f2f2" textLength="100" lengthAdjust="spacingAndGlyphs" stroke="#f2f2f2" stroke-width="0.3">201,1601</text>
<text x="1297.6" y="839.4" font-size="19" fill="#f2f2f2" textLength="100" lengthAdjust="spacingAndGlyphs" stroke="#f2f2f2" stroke-width="0.3">199,1884</text>
<text x="1410.8" y="839.4" font-size="19" fill="#f2f2f2" textLength="100" lengthAdjust="spacingAndGlyphs" stroke="#f2f2f2" stroke-width="0.3">196,8836</text>
<rect x="745" y="847.6" width="773" height="30.4" fill="#7a7a7a"/>
<text x="765" y="869.6" font-size="19" fill="#f2f2f2" textLength="166" lengthAdjust="spacingAndGlyphs" font-weight="bold">Target x:CIE31</text>
<text x="958.0" y="869.6" font-size="19" fill="#f2f2f2" textLength="73" lengthAdjust="spacingAndGlyphs" stroke="#f2f2f2" stroke-width="0.3">0,3344</text>
<text x="1071.2" y="869.6" font-size="19" fill="#f2f2f2" textLength="73" lengthAdjust="spacingAndGlyphs" stroke="#f2f2f2" stroke-width="0.3">0,3564</text>
<text x="1184.4" y="869.6" font-size="19" fill="#f2f2f2" textLength="73" lengthAdjust="spacingAndGlyphs" stroke="#f2f2f2" stroke-width="0.3">0,3773</text>
<text x="1297.6" y="869.6" font-size="19" fill="#f2f2f2" textLength="73" lengthAdjust="spacingAndGlyphs" stroke="#f2f2f2" stroke-width="0.3">0,3969</text>
<text x="1410.8" y="869.6" font-size="19" fill="#f2f2f2" textLength="73" lengthAdjust="spacingAndGlyphs" stroke="#f2f2f2" stroke-width="0.3">0,4193</text>
<rect x="745" y="877.8" width="773" height="30.4" fill="#3c3c3c"/>
<text x="765" y="899.8" font-size="19" fill="#f2f2f2" textLength="166" lengthAdjust="spacingAndGlyphs" font-weight="bold">Target y:CIE31</text>
<text x="958.0" y="899.8" font-size="19" fill="#f2f2f2" textLength="73" lengthAdjust="spacingAndGlyphs" stroke="#f2f2f2" stroke-width="0.3">0,3648</text>
<text x="1071.2" y="899.8" font-size="19" fill="#f2f2f2" textLength="73" lengthAdjust="spacingAndGlyphs" stroke="#f2f2f2" stroke-width="0.3">0,4013</text>
<text x="1184.4" y="899.8" font-size="19" fill="#f2f2f2" textLength="73" lengthAdjust="spacingAndGlyphs" stroke="#f2f2f2" stroke-width="0.3">0,4358</text>
<text x="1297.6" y="899.8" font-size="19" fill="#f2f2f2" textLength="73" lengthAdjust="spacingAndGlyphs" stroke="#f2f2f2" stroke-width="0.3">0,4682</text>
<text x="1410.8" y="899.8" font-size="19" fill="#f2f2f2" textLength="73" lengthAdjust="spacingAndGlyphs" stroke="#f2f2f2" stroke-width="0.3">0,5053</text>
<rect x="745" y="908.0" width="773" height="30.4" fill="#7a7a7a"/>
<text x="765" y="930.0" font-size="19" fill="#f2f2f2" textLength="96" lengthAdjust="spacingAndGlyphs" font-weight="bold">Target Y</text>
<text x="958.0" y="930.0" font-size="19" fill="#f2f2f2" textLength="100" lengthAdjust="spacingAndGlyphs" stroke="#f2f2f2" stroke-width="0.3">209,4646</text>
<text x="1071.2" y="930.0" font-size="19" fill="#f2f2f2" textLength="100" lengthAdjust="spacingAndGlyphs" stroke="#f2f2f2" stroke-width="0.3">205,7879</text>
<text x="1184.4" y="930.0" font-size="19" fill="#f2f2f2" textLength="100" lengthAdjust="spacingAndGlyphs" stroke="#f2f2f2" stroke-width="0.3">202,9629</text>
<text x="1297.6" y="930.0" font-size="19" fill="#f2f2f2" textLength="100" lengthAdjust="spacingAndGlyphs" stroke="#f2f2f2" stroke-width="0.3">200,7458</text>
<text x="1410.8" y="930.0" font-size="19" fill="#f2f2f2" textLength="100" lengthAdjust="spacingAndGlyphs" stroke="#f2f2f2" stroke-width="0.3">198,6024</text>
<text x="1008.5" y="749" font-size="18" fill="#f2f2f2" text-anchor="middle" textLength="43" lengthAdjust="spacingAndGlyphs" stroke="#f2f2f2" stroke-width="0.3">20%</text>
<text x="1121.7" y="749" font-size="18" fill="#f2f2f2" text-anchor="middle" textLength="43" lengthAdjust="spacingAndGlyphs" stroke="#f2f2f2" stroke-width="0.3">40%</text>
<text x="1234.9" y="749" font-size="18" fill="#f2f2f2" text-anchor="middle" textLength="43" lengthAdjust="spacingAndGlyphs" stroke="#f2f2f2" stroke-width="0.3">60%</text>
<text x="1348.1" y="749" font-size="18" fill="#f2f2f2" text-anchor="middle" textLength="43" lengthAdjust="spacingAndGlyphs" stroke="#f2f2f2" stroke-width="0.3">80%</text>
<text x="1461.3" y="749" font-size="18" fill="#f2f2f2" text-anchor="middle" textLength="56" lengthAdjust="spacingAndGlyphs" stroke="#f2f2f2" stroke-width="0.3">100%</text>
<linearGradient id="botbg" x1="0" x2="0" y1="0" y2="1"><stop offset="0" stop-color="#2a2a2a"/><stop offset="1" stop-color="#3c3c3c"/></linearGradient>
<linearGradient id="swbtn" x1="0" x2="0" y1="0" y2="1"><stop offset="0" stop-color="#a4a4a4"/><stop offset="0.55" stop-color="#8a8a8a"/><stop offset="1" stop-color="#5e5e5e"/></linearGradient>
<linearGradient id="ctlbtn" x1="0" x2="0" y1="0" y2="1"><stop offset="0" stop-color="#b2b2b2"/><stop offset="1" stop-color="#787878"/></linearGradient>
<linearGradient id="knob" x1="0" x2="0" y1="0" y2="1"><stop offset="0" stop-color="#000" stop-opacity="0.22"/><stop offset="1" stop-color="#fff" stop-opacity="0.12"/></linearGradient>
<rect x="0" y="968" width="1920" height="71" fill="url(#botbg)"/>
<linearGradient id="stripg" x1="0" x2="0" y1="0" y2="1"><stop offset="0" stop-color="#474747"/><stop offset="1" stop-color="#272727"/></linearGradient>
<rect x="0" y="968.5" width="1563" height="71" fill="url(#stripg)"/>
<linearGradient id="botleft" x1="0" x2="1" y1="0" y2="0"><stop offset="0" stop-color="#2e2e2e"/><stop offset="0.92" stop-color="#2e2e2e"/><stop offset="1" stop-color="#444"/></linearGradient>
<rect x="1" y="968.5" width="51" height="69" rx="4" fill="url(#swbtn)"/>
<circle cx="26.5" cy="979" r="8.5" fill="url(#knob)"/>
<path d="M21.5 981.5 H31.5 L26.5 976.5 Z" fill="#222"/>
<rect x="7" y="998" width="39" height="35" rx="4" fill="#ffff00" stroke="#b8b800" stroke-width="1"/>
<rect x="59.0" y="968.5" width="169.5" height="69" rx="4" fill="url(#swbtn)"/>
<rect x="65.5" y="975" width="157" height="41" rx="4" fill="#bfbfa3" stroke="#6e6e58" stroke-width="1.2"/>
<text x="143.5" y="1032.5" font-size="11.5" fill="#2a2a2a" text-anchor="middle" textLength="23" lengthAdjust="spacingAndGlyphs" font-weight="bold">20%</text>
<rect x="230.6" y="968.5" width="169.5" height="69" rx="4" fill="url(#swbtn)"/>
<rect x="237.1" y="975" width="157" height="41" rx="4" fill="#c0c08a" stroke="#6e6e58" stroke-width="1.2"/>
<text x="315.1" y="1032.5" font-size="11.5" fill="#2a2a2a" text-anchor="middle" textLength="23" lengthAdjust="spacingAndGlyphs" font-weight="bold">40%</text>
<rect x="402.2" y="968.5" width="169.5" height="69" rx="4" fill="url(#swbtn)"/>
<rect x="408.7" y="975" width="157" height="41" rx="4" fill="#c2c06c" stroke="#6e6e58" stroke-width="1.2"/>
<text x="486.7" y="1032.5" font-size="11.5" fill="#2a2a2a" text-anchor="middle" textLength="23" lengthAdjust="spacingAndGlyphs" font-weight="bold">60%</text>
<rect x="573.8" y="968.5" width="169.5" height="69" rx="4" fill="url(#swbtn)"/>
<rect x="580.3" y="975" width="157" height="41" rx="4" fill="#c0bb48" stroke="#6e6e58" stroke-width="1.2"/>
<text x="658.3" y="1032.5" font-size="11.5" fill="#2a2a2a" text-anchor="middle" textLength="23" lengthAdjust="spacingAndGlyphs" font-weight="bold">80%</text>
<rect x="745.9" y="968.5" width="170" height="69" rx="4" fill="url(#selbtn)"/>
<rect x="751.4" y="974" width="158.5" height="42" rx="5" fill="#c3c000" stroke="#8a8600" stroke-width="1"/>
<text x="830.4" y="1032.5" font-size="11.5" fill="#ffffff" text-anchor="middle" textLength="30" lengthAdjust="spacingAndGlyphs" font-weight="bold">100%</text>
<rect x="1563.5" y="968.5" width="54" height="69" rx="4" fill="url(#ctlbtn)"/>
<rect x="1563.5" y="988.5" width="54" height="1.5" fill="#5a5a5a"/>
<circle cx="1590.5" cy="979" r="8" fill="url(#knob)"/>
<path d="M1585.5 981 H1595.5 L1590.5 976 Z" fill="#333"/>
<rect x="1574.5" y="997.5" width="32" height="32" rx="4" fill="#b0b0b0" stroke="#222" stroke-width="2.2"/>
<rect x="1583" y="1006.5" width="15.5" height="15.5" fill="#111"/>
<rect x="1619.0" y="968.5" width="50.5" height="34" fill="url(#ctlbtn)"/>
<circle cx="1644.5" cy="985.5" r="10.5" fill="url(#knob)"/>
<rect x="1670.4" y="968.5" width="50.5" height="34" fill="url(#ctlbtn)"/>
<circle cx="1695.9" cy="985.5" r="10.5" fill="url(#knob)"/>
<rect x="1721.8" y="968.5" width="50.5" height="34" fill="url(#ctlbtn)"/>
<circle cx="1747.3" cy="985.5" r="10.5" fill="url(#knob)"/>
<rect x="1773.2" y="968.5" width="50.5" height="34" fill="url(#ctlbtn)"/>
<circle cx="1798.7" cy="985.5" r="10.5" fill="url(#knob)"/>
<rect x="1824.6" y="968.5" width="50.5" height="34" fill="url(#ctlbtn)"/>
<circle cx="1850.1" cy="985.5" r="10.5" fill="url(#knob)"/>
<rect x="1640.0" y="981" width="9" height="9" fill="#333"/>
<path d="M1692.4 979.5 L1701.4 985.5 L1692.4 992 Z" fill="#333"/>
<text x="1747.3" y="990.5" font-size="12" fill="#333" text-anchor="middle" textLength="15" lengthAdjust="spacingAndGlyphs" font-weight="bold">[··]</text>
<path d="M1791.7 985.5 C1791.7 980 1805.7 991 1805.7 985.5 C1805.7 980 1791.7 991 1791.7 985.5 Z" fill="none" stroke="#333" stroke-width="2.2"/>
<path d="M1845.1 983 A6 6 0 0 1 1855.1 982 M1855.1 988 A6 6 0 0 1 1845.1 989" fill="none" stroke="#333" stroke-width="2.4"/>
<path d="M1852.1 980 L1857.1 979 L1856.1 984 Z M1848.1 991 L1843.1 992 L1844.1 987 Z" fill="#333"/>
<rect x="1876" y="968.5" width="44" height="34" fill="#222"/>
<circle cx="1899" cy="985.5" r="11" fill="#333"/>
<rect x="1619" y="1004" width="153.5" height="34" fill="url(#ctlbtn)"/>
<rect x="1773.5" y="1004" width="147" height="34" fill="url(#ctlbtn)"/>
<circle cx="1653.5" cy="1021" r="11" fill="url(#knob)"/>
<circle cx="1893" cy="1021" r="11" fill="url(#knob)"/>
<text x="1653.5" y="1027" font-size="20" fill="#333" text-anchor="middle" stroke="#333" stroke-width="0.3">«</text>
<text x="1893" y="1027" font-size="20" fill="#333" text-anchor="middle" stroke="#333" stroke-width="0.3">»</text>
<text x="1684" y="1030" font-size="26" fill="#333" textLength="58" lengthAdjust="spacingAndGlyphs" font-weight="bold">Back</text>
<text x="1803" y="1030" font-size="26" fill="#333" textLength="60" lengthAdjust="spacingAndGlyphs" font-weight="bold">Next</text>
<rect x="1116.25" y="118.75" width="731" height="585.5" fill="#333333" stroke="#c4c000" stroke-width="7.5"/>
<text x="1481.5" y="141.5" font-size="16" fill="#dcdcdc" text-anchor="middle" textLength="81" lengthAdjust="spacingAndGlyphs" stroke="#dcdcdc" stroke-width="0.3">CIE 1931 xy</text>
<rect x="1151" y="146.5" width="690" height="524.0" fill="#232323" stroke="#a8a8a8" stroke-width="2"/>
<rect x="1149.8" y="670.5" width="2" height="6" fill="#a8a8a8"/>
<text x="1150.8" y="693" font-size="16" fill="#dcdcdc" text-anchor="middle" stroke="#dcdcdc" stroke-width="0.3">0</text>
<rect x="1232.0" y="670.5" width="2" height="6" fill="#a8a8a8"/>
<text x="1233.0" y="693" font-size="16" fill="#dcdcdc" text-anchor="middle" textLength="19" lengthAdjust="spacingAndGlyphs" stroke="#dcdcdc" stroke-width="0.3">0,1</text>
<rect x="1314.2" y="670.5" width="2" height="6" fill="#a8a8a8"/>
<text x="1315.2" y="693" font-size="16" fill="#dcdcdc" text-anchor="middle" textLength="19" lengthAdjust="spacingAndGlyphs" stroke="#dcdcdc" stroke-width="0.3">0,2</text>
<rect x="1396.4" y="670.5" width="2" height="6" fill="#a8a8a8"/>
<text x="1397.4" y="693" font-size="16" fill="#dcdcdc" text-anchor="middle" textLength="19" lengthAdjust="spacingAndGlyphs" stroke="#dcdcdc" stroke-width="0.3">0,3</text>
<rect x="1478.6" y="670.5" width="2" height="6" fill="#a8a8a8"/>
<text x="1479.6" y="693" font-size="16" fill="#dcdcdc" text-anchor="middle" textLength="19" lengthAdjust="spacingAndGlyphs" stroke="#dcdcdc" stroke-width="0.3">0,4</text>
<rect x="1560.8" y="670.5" width="2" height="6" fill="#a8a8a8"/>
<text x="1561.8" y="693" font-size="16" fill="#dcdcdc" text-anchor="middle" textLength="19" lengthAdjust="spacingAndGlyphs" stroke="#dcdcdc" stroke-width="0.3">0,5</text>
<rect x="1643.0" y="670.5" width="2" height="6" fill="#a8a8a8"/>
<text x="1644.0" y="693" font-size="16" fill="#dcdcdc" text-anchor="middle" textLength="19" lengthAdjust="spacingAndGlyphs" stroke="#dcdcdc" stroke-width="0.3">0,6</text>
<rect x="1725.2" y="670.5" width="2" height="6" fill="#a8a8a8"/>
<text x="1726.2" y="693" font-size="16" fill="#dcdcdc" text-anchor="middle" textLength="19" lengthAdjust="spacingAndGlyphs" stroke="#dcdcdc" stroke-width="0.3">0,7</text>
<rect x="1807.4" y="670.5" width="2" height="6" fill="#a8a8a8"/>
<text x="1808.4" y="693" font-size="16" fill="#dcdcdc" text-anchor="middle" textLength="19" lengthAdjust="spacingAndGlyphs" stroke="#dcdcdc" stroke-width="0.3">0,8</text>
<rect x="1145" y="669.3" width="6" height="2" fill="#a8a8a8"/>
<text x="1144" y="675.8" font-size="16" fill="#dcdcdc" text-anchor="end" stroke="#dcdcdc" stroke-width="0.3">0</text>
<rect x="1145" y="607.1" width="6" height="2" fill="#a8a8a8"/>
<text x="1144" y="613.6" font-size="16" fill="#dcdcdc" text-anchor="end" textLength="21" lengthAdjust="spacingAndGlyphs" stroke="#dcdcdc" stroke-width="0.3">0,1</text>
<rect x="1145" y="544.9" width="6" height="2" fill="#a8a8a8"/>
<text x="1144" y="551.4" font-size="16" fill="#dcdcdc" text-anchor="end" textLength="21" lengthAdjust="spacingAndGlyphs" stroke="#dcdcdc" stroke-width="0.3">0,2</text>
<rect x="1145" y="482.7" width="6" height="2" fill="#a8a8a8"/>
<text x="1144" y="489.2" font-size="16" fill="#dcdcdc" text-anchor="end" textLength="21" lengthAdjust="spacingAndGlyphs" stroke="#dcdcdc" stroke-width="0.3">0,3</text>
<rect x="1145" y="420.5" width="6" height="2" fill="#a8a8a8"/>
<text x="1144" y="427.0" font-size="16" fill="#dcdcdc" text-anchor="end" textLength="21" lengthAdjust="spacingAndGlyphs" stroke="#dcdcdc" stroke-width="0.3">0,4</text>
<rect x="1145" y="358.3" width="6" height="2" fill="#a8a8a8"/>
<text x="1144" y="364.8" font-size="16" fill="#dcdcdc" text-anchor="end" textLength="21" lengthAdjust="spacingAndGlyphs" stroke="#dcdcdc" stroke-width="0.3">0,5</text>
<rect x="1145" y="296.1" width="6" height="2" fill="#a8a8a8"/>
<text x="1144" y="302.6" font-size="16" fill="#dcdcdc" text-anchor="end" textLength="21" lengthAdjust="spacingAndGlyphs" stroke="#dcdcdc" stroke-width="0.3">0,6</text>
<rect x="1145" y="233.9" width="6" height="2" fill="#a8a8a8"/>
<text x="1144" y="240.4" font-size="16" fill="#dcdcdc" text-anchor="end" textLength="21" lengthAdjust="spacingAndGlyphs" stroke="#dcdcdc" stroke-width="0.3">0,7</text>
<rect x="1145" y="171.7" width="6" height="2" fill="#a8a8a8"/>
<text x="1144" y="178.2" font-size="16" fill="#dcdcdc" text-anchor="end" textLength="21" lengthAdjust="spacingAndGlyphs" stroke="#dcdcdc" stroke-width="0.3">0,8</text>
</svg>
<style>.r{display:block}</style>
<div class="L" style="clip-path:path('M1293.9 667.2C1293.8 667.2 1293.5 667.3 1293.3 667.3C1293.0 667.3 1292.9 667.3 1292.7 667.3C1292.4 667.3 1292.0 667.2 1291.7 667.1C1291.4 667.0 1291.1 666.9 1290.8 666.7C1290.4 666.5 1290.1 666.3 1289.6 666.0C1289.2 665.7 1288.6 665.4 1288.0 665.0C1287.4 664.5 1286.7 664.1 1285.9 663.5C1285.1 663.0 1284.3 662.4 1283.2 661.7C1282.2 661.0 1280.9 660.2 1279.5 659.3C1278.1 658.4 1276.6 657.4 1274.9 656.2C1273.2 654.9 1271.3 653.6 1269.2 651.8C1267.0 650.0 1264.9 648.4 1262.2 645.5C1259.5 642.6 1256.4 639.2 1252.8 634.3C1249.3 629.5 1245.4 624.1 1240.9 616.3C1236.4 608.5 1231.5 599.6 1225.8 587.8C1220.2 576.0 1213.6 562.3 1207.3 545.5C1201.0 528.6 1194.3 508.8 1188.1 486.8C1181.9 464.8 1175.2 438.8 1170.1 413.6C1165.0 388.4 1160.2 360.5 1157.5 335.4C1154.9 310.3 1153.2 285.0 1154.0 263.0C1154.8 241.1 1157.4 220.0 1162.2 203.7C1167.0 187.4 1174.5 173.9 1182.8 165.2C1191.1 156.6 1201.6 153.1 1211.9 151.7C1222.2 150.2 1233.7 153.5 1244.7 156.4C1255.7 159.3 1267.2 164.4 1278.0 169.0C1288.7 173.7 1299.1 178.8 1309.4 184.1C1319.6 189.5 1329.5 195.2 1339.5 201.1C1349.5 207.1 1359.4 213.4 1369.3 219.8C1379.2 226.2 1388.9 232.9 1398.7 239.7C1408.5 246.5 1418.3 253.4 1428.1 260.5C1437.9 267.5 1447.7 274.7 1457.5 281.9C1467.3 289.0 1477.0 296.3 1486.8 303.6C1496.5 310.8 1506.2 318.1 1515.9 325.3C1525.5 332.5 1535.0 339.7 1544.4 346.7C1553.7 353.8 1563.0 360.8 1572.1 367.6C1581.1 374.5 1590.0 381.2 1598.6 387.7C1607.2 394.1 1615.7 400.4 1623.6 406.4C1631.6 412.4 1639.3 418.3 1646.4 423.7C1653.5 429.0 1660.0 433.9 1666.2 438.6C1672.4 443.3 1678.3 447.7 1683.6 451.7C1688.9 455.7 1693.7 459.3 1698.1 462.6C1702.5 465.8 1706.3 468.8 1709.8 471.4C1713.4 474.1 1716.4 476.4 1719.2 478.5C1722.0 480.7 1724.4 482.4 1726.7 484.1C1728.9 485.8 1730.2 486.8 1732.7 488.7C1735.2 490.6 1739.3 493.7 1741.8 495.6C1744.3 497.4 1745.8 498.5 1747.6 499.9C1749.4 501.2 1751.3 502.7 1752.5 503.6C1753.7 504.5 1754.4 505.0 1754.7 505.3Z')"><div class="L" style="filter:blur(1.2px)">
<i class="r" style="left:1202px;top:147px;width:29px;background:linear-gradient(90deg,#009900 0px,#009900 28px)"></i>
<i class="r" style="left:1196px;top:150px;width:55px;background:linear-gradient(90deg,#009900 0px,#009900 54px)"></i>
<i class="r" style="left:1189px;top:153px;width:70px;background:linear-gradient(90deg,#009900 0px,#009900 69px)"></i>
<i class="r" style="left:1183px;top:156px;width:83px;background:linear-gradient(90deg,#009900 0px,#009900 82px)"></i>
<i class="r" style="left:1177px;top:159px;width:97px;background:linear-gradient(90deg,#009900 0px,#009900 96px)"></i>
<i class="r" style="left:1175px;top:162px;width:106px;background:linear-gradient(90deg,#009900 0px,#009900 105px)"></i>
<i class="r" style="left:1174px;top:165px;width:114px;background:linear-gradient(90deg,#009901 0px,#009900 113px)"></i>
<i class="r" style="left:1172px;top:168px;width:123px;background:linear-gradient(90deg,#009902 0px,#009900 122px)"></i>
<i class="r" style="left:1171px;top:171px;width:130px;background:linear-gradient(90deg,#009903 0px,#009900 129px)"></i>
<i class="r" style="left:1169px;top:174px;width:138px;background:linear-gradient(90deg,#009904 0px,#009900 106px,#009900 137px)"></i>
<i class="r" style="left:1168px;top:177px;width:146px;background:linear-gradient(90deg,#009905 0px,#009900 83px,#009900 145px)"></i>
<i class="r" style="left:1166px;top:180px;width:154px;background:linear-gradient(90deg,#009906 0px,#009900 79px,#009900 153px)"></i>
<i class="r" style="left:1164px;top:183px;width:161px;background:linear-gradient(90deg,#009907 0px,#009900 81px,#009900 160px)"></i>
<i class="r" style="left:1163px;top:186px;width:167px;background:linear-gradient(90deg,#009908 0px,#009900 84px,#009900 166px)"></i>
<i class="r" style="left:1161px;top:189px;width:174px;background:linear-gradient(90deg,#009909 0px,#009900 89px,#009900 173px)"></i>
<i class="r" style="left:1160px;top:192px;width:181px;background:linear-gradient(90deg,#00990a 0px,#009900 93px,#009900 180px)"></i>
<i class="r" style="left:1158px;top:195px;width:188px;background:linear-gradient(90deg,#00990b 0px,#009900 99px,#009900 187px)"></i>
<i class="r" style="left:1157px;top:198px;width:194px;background:linear-gradient(90deg,#00990c 0px,#009900 104px,#009900 193px)"></i>
<i class="r" style="left:1156px;top:201px;width:200px;background:linear-gradient(90deg,#00990d 0px,#009900 110px,#009900 199px)"></i>
<i class="r" style="left:1156px;top:204px;width:205px;background:linear-gradient(90deg,#00990d 0px,#009900 114px,#009900 204px)"></i>
<i class="r" style="left:1156px;top:207px;width:210px;background:linear-gradient(90deg,#00990e 0px,#009900 119px,#009900 209px)"></i>
<i class="r" style="left:1155px;top:210px;width:216px;background:linear-gradient(90deg,#00990f 0px,#009900 124px,#009900 215px)"></i>
<i class="r" style="left:1155px;top:213px;width:221px;background:linear-gradient(90deg,#009910 0px,#009900 129px,#009900 220px)"></i>
<i class="r" style="left:1154px;top:216px;width:226px;background:linear-gradient(90deg,#009911 0px,#009900 134px,#009900 225px)"></i>
<i class="r" style="left:1154px;top:219px;width:231px;background:linear-gradient(90deg,#009912 0px,#009900 139px,#009900 230px)"></i>
<i class="r" style="left:1154px;top:222px;width:235px;background:linear-gradient(90deg,#009913 0px,#009900 144px,#009900 234px)"></i>
<i class="r" style="left:1153px;top:225px;width:240px;background:linear-gradient(90deg,#009914 0px,#009900 150px,#009900 239px)"></i>
<i class="r" style="left:1153px;top:228px;width:245px;background:linear-gradient(90deg,#009914 0px,#009900 154px,#009900 244px)"></i>
<i class="r" style="left:1152px;top:231px;width:250px;background:linear-gradient(90deg,#009915 0px,#009900 160px,#009900 249px)"></i>
<i class="r" style="left:1152px;top:234px;width:254px;background:linear-gradient(90deg,#009916 0px,#009900 165px,#009900 253px)"></i>
<i class="r" style="left:1152px;top:237px;width:259px;background:linear-gradient(90deg,#009917 0px,#009900 170px,#009900 258px)"></i>
<i class="r" style="left:1151px;top:240px;width:264px;background:linear-gradient(90deg,#009918 0px,#009900 175px,#009900 263px)"></i>
<i class="r" style="left:1151px;top:243px;width:268px;background:linear-gradient(90deg,#009919 0px,#009900 180px,#019900 267px)"></i>
<i class="r" style="left:1150px;top:246px;width:274px;background:linear-gradient(90deg,#00991a 0px,#009900 186px,#039900 269px,#069900 273px)"></i>
<i class="r" style="left:1150px;top:249px;width:278px;background:linear-gradient(90deg,#00991b 0px,#009900 191px,#039900 268px,#0b9900 277px)"></i>
<i class="r" style="left:1150px;top:252px;width:282px;background:linear-gradient(90deg,#00991c 0px,#009900 195px,#029900 266px,#0f9900 281px)"></i>
<i class="r" style="left:1149px;top:255px;width:287px;background:linear-gradient(90deg,#00991d 0px,#009900 201px,#029900 266px,#139900 286px)"></i>
<i class="r" style="left:1149px;top:258px;width:292px;background:linear-gradient(90deg,#00991e 0px,#009900 206px,#039900 265px,#199900 291px)"></i>
<i class="r" style="left:1149px;top:261px;width:296px;background:linear-gradient(90deg,#00991f 0px,#009900 211px,#039900 264px,#1d9900 295px)"></i>
<i class="r" style="left:1149px;top:264px;width:300px;background:linear-gradient(90deg,#009920 0px,#009900 216px,#039900 263px,#229900 299px)"></i>
<i class="r" style="left:1149px;top:267px;width:304px;background:linear-gradient(90deg,#009921 0px,#009900 221px,#039900 262px,#279900 303px)"></i>
<i class="r" style="left:1149px;top:270px;width:308px;background:linear-gradient(90deg,#009922 0px,#009900 225px,#039900 261px,#2b9900 307px)"></i>
<i class="r" style="left:1149px;top:273px;width:312px;background:linear-gradient(90deg,#009923 0px,#009900 230px,#039900 260px,#309900 311px)"></i>
<i class="r" style="left:1149px;top:276px;width:316px;background:linear-gradient(90deg,#009924 0px,#009900 235px,#039900 259px,#369900 315px)"></i>
<i class="r" style="left:1150px;top:279px;width:319px;background:linear-gradient(90deg,#009925 0px,#009900 239px,#039900 257px,#3b9900 318px)"></i>
<i class="r" style="left:1150px;top:282px;width:323px;background:linear-gradient(90deg,#009926 0px,#009901 221px,#039900 255px,#409900 322px)"></i>
<i class="r" style="left:1150px;top:285px;width:327px;background:linear-gradient(90deg,#009927 0px,#009902 222px,#039900 254px,#469900 326px)"></i>
<i class="r" style="left:1150px;top:288px;width:331px;background:linear-gradient(90deg,#009928 0px,#009903 223px,#039900 253px,#4c9900 330px)"></i>
<i class="r" style="left:1150px;top:291px;width:335px;background:linear-gradient(90deg,#009929 0px,#009904 224px,#039900 252px,#529900 334px)"></i>
<i class="r" style="left:1150px;top:294px;width:339px;background:linear-gradient(90deg,#00992b 0px,#009905 224px,#039900 251px,#589900 338px)"></i>
<i class="r" style="left:1150px;top:297px;width:343px;background:linear-gradient(90deg,#00992c 0px,#009906 225px,#039900 250px,#5e9900 342px)"></i>
<i class="r" style="left:1150px;top:300px;width:347px;background:linear-gradient(90deg,#00992d 0px,#009908 225px,#039902 249px,#659900 346px)"></i>
<i class="r" style="left:1151px;top:303px;width:350px;background:linear-gradient(90deg,#00992e 0px,#009909 225px,#039903 247px,#6c9900 349px)"></i>
<i class="r" style="left:1151px;top:306px;width:354px;background:linear-gradient(90deg,#00992f 0px,#00990a 225px,#049905 246px,#319900 292px,#739900 353px)"></i>
<i class="r" style="left:1151px;top:309px;width:358px;background:linear-gradient(90deg,#009930 0px,#00990b 225px,#049907 245px,#2f9900 289px,#7b9900 357px)"></i>
<i class="r" style="left:1151px;top:312px;width:362px;background:linear-gradient(90deg,#009932 0px,#00990d 225px,#039908 243px,#339900 291px,#829900 361px)"></i>
<i class="r" style="left:1151px;top:315px;width:366px;background:linear-gradient(90deg,#009933 0px,#00990e 225px,#03990a 242px,#389900 294px,#8a9900 365px)"></i>
<i class="r" style="left:1151px;top:318px;width:370px;background:linear-gradient(90deg,#009934 0px,#00990f 225px,#03990c 241px,#3e9900 298px,#939900 369px)"></i>
<i class="r" style="left:1151px;top:321px;width:374px;background:linear-gradient(90deg,#009935 0px,#009911 225px,#03990d 240px,#459900 303px,#999700 373px)"></i>
<i class="r" style="left:1151px;top:324px;width:378px;background:linear-gradient(90deg,#009937 0px,#009912 225px,#03990f 239px,#4b9900 307px,#999600 371px,#998e00 377px)"></i>
<i class="r" style="left:1152px;top:327px;width:381px;background:linear-gradient(90deg,#009938 0px,#009914 224px,#049911 237px,#539900 311px,#999700 367px,#998700 380px)"></i>
<i class="r" style="left:1152px;top:330px;width:385px;background:linear-gradient(90deg,#009939 0px,#009915 224px,#059912 237px,#5a9900 315px,#999600 365px,#997f00 384px)"></i>
<i class="r" style="left:1152px;top:333px;width:389px;background:linear-gradient(90deg,#00993b 0px,#009917 224px,#059914 236px,#639900 320px,#999700 362px,#997900 388px)"></i>
<i class="r" style="left:1152px;top:336px;width:393px;background:linear-gradient(90deg,#00993c 0px,#009918 224px,#059916 235px,#6c9900 325px,#999700 360px,#997200 392px)"></i>
<i class="r" style="left:1152px;top:339px;width:398px;background:linear-gradient(90deg,#00993d 0px,#00991a 224px,#069917 235px,#709900 326px,#999600 358px,#996b00 397px)"></i>
<i class="r" style="left:1153px;top:342px;width:401px;background:linear-gradient(90deg,#00993f 0px,#00991c 223px,#0a9919 236px,#719900 324px,#999700 354px,#996b00 394px,#996600 400px)"></i>
<i class="r" style="left:1153px;top:345px;width:405px;background:linear-gradient(90deg,#009940 0px,#00991d 223px,#1b9917 251px,#7f9900 332px,#999600 352px,#996a00 392px,#996000 404px)"></i>
<i class="r" style="left:1154px;top:348px;width:408px;background:linear-gradient(90deg,#009942 0px,#00991f 223px,#659907 310px,#969900 345px,#996700 392px,#995b00 407px)"></i>
<i class="r" style="left:1154px;top:351px;width:412px;background:linear-gradient(90deg,#009943 0px,#009921 222px,#67990a 309px,#999600 346px,#996a00 385px,#995700 411px)"></i>
<i class="r" style="left:1155px;top:354px;width:415px;background:linear-gradient(90deg,#009944 0px,#019922 222px,#6f990a 312px,#999600 343px,#996900 382px,#995200 414px)"></i>
<i class="r" style="left:1155px;top:357px;width:419px;background:linear-gradient(90deg,#009946 0px,#039924 222px,#6f990d 310px,#999702 340px,#996a00 378px,#994e00 418px)"></i>
<i class="r" style="left:1156px;top:360px;width:422px;background:linear-gradient(90deg,#009947 0px,#039926 220px,#6f990f 307px,#999605 337px,#996f00 369px,#994a00 421px)"></i>
<i class="r" style="left:1156px;top:363px;width:426px;background:linear-gradient(90deg,#009949 0px,#039928 219px,#6f9912 305px,#999708 334px,#997000 366px,#994800 421px,#994600 425px)"></i>
<i class="r" style="left:1157px;top:366px;width:428px;background:linear-gradient(90deg,#00994b 0px,#02992b 216px,#6f9915 302px,#99960b 331px,#996a00 368px,#994300 425px,#994200 427px)"></i>
<i class="r" style="left:1157px;top:369px;width:432px;background:linear-gradient(90deg,#00994c 0px,#02992d 215px,#6e9918 299px,#99960e 329px,#996900 366px,#994300 423px,#993f00 431px)"></i>
<i class="r" style="left:1158px;top:372px;width:435px;background:linear-gradient(90deg,#00994e 0px,#02992f 213px,#6e991b 296px,#999711 325px,#996a02 361px,#994400 417px,#993b00 434px)"></i>
<i class="r" style="left:1158px;top:375px;width:439px;background:linear-gradient(90deg,#009950 0px,#029931 212px,#6e991d 294px,#999614 323px,#996a04 359px,#994800 405px,#993800 438px)"></i>
<i class="r" style="left:1159px;top:378px;width:442px;background:linear-gradient(90deg,#009951 0px,#039934 210px,#6e9920 291px,#999717 319px,#996b07 354px,#994d00 392px,#993500 441px)"></i>
<i class="r" style="left:1159px;top:381px;width:446px;background:linear-gradient(90deg,#009953 0px,#039936 209px,#6f9923 289px,#99961a 317px,#996a09 352px,#994a00 394px,#993200 445px)"></i>
<i class="r" style="left:1160px;top:384px;width:449px;background:linear-gradient(90deg,#009955 0px,#039939 207px,#6f9926 286px,#99971e 313px,#996b0c 347px,#994600 396px,#992f00 448px)"></i>
<i class="r" style="left:1160px;top:387px;width:453px;background:linear-gradient(90deg,#009957 0px,#03993b 206px,#6f9929 284px,#999621 311px,#996a0f 345px,#994300 398px,#992c00 452px)"></i>
<i class="r" style="left:1161px;top:390px;width:456px;background:linear-gradient(90deg,#009959 0px,#02993e 203px,#6f992c 281px,#999624 308px,#996911 342px,#994200 395px,#992a00 455px)"></i>
<i class="r" style="left:1161px;top:393px;width:460px;background:linear-gradient(90deg,#00995b 0px,#029941 202px,#6f992f 279px,#999727 305px,#996b14 338px,#994403 389px,#992700 459px)"></i>
<i class="r" style="left:1162px;top:396px;width:463px;background:linear-gradient(90deg,#00995d 0px,#029943 200px,#6f9933 276px,#99962b 302px,#996a16 335px,#994304 386px,#992b00 440px,#992400 462px)"></i>
<i class="r" style="left:1162px;top:399px;width:467px;background:linear-gradient(90deg,#00995f 0px,#029946 199px,#6f9936 274px,#99972f 299px,#996b1a 331px,#994407 381px,#992e00 428px,#992200 466px)"></i>
<i class="r" style="left:1163px;top:402px;width:470px;background:linear-gradient(90deg,#009961 0px,#039949 197px,#6e993a 270px,#999632 296px,#996a1c 328px,#994309 378px,#992c00 429px,#992000 469px)"></i>
<i class="r" style="left:1163px;top:405px;width:474px;background:linear-gradient(90deg,#009963 0px,#03994c 196px,#6e993d 268px,#999736 293px,#996b20 324px,#99450c 372px,#992a00 431px,#991d00 473px)"></i>
<i class="r" style="left:1164px;top:408px;width:477px;background:linear-gradient(90deg,#009965 0px,#03994f 194px,#6e9941 265px,#99973a 290px,#996a22 321px,#99440e 369px,#992700 435px,#991b00 476px)"></i>
<i class="r" style="left:1164px;top:411px;width:481px;background:linear-gradient(90deg,#009967 0px,#029952 192px,#6e9944 263px,#99963d 288px,#996925 319px,#99430f 367px,#992400 439px,#991900 480px)"></i>
<i class="r" style="left:1165px;top:414px;width:484px;background:linear-gradient(90deg,#009969 0px,#029955 190px,#6e9948 260px,#999742 284px,#996b29 314px,#994412 361px,#992200 439px,#991700 483px)"></i>
<i class="r" style="left:1165px;top:417px;width:488px;background:linear-gradient(90deg,#00996c 0px,#029958 189px,#6f994c 258px,#999645 282px,#996a2b 312px,#994314 358px,#992200 435px,#991500 487px)"></i>
<i class="r" style="left:1166px;top:420px;width:491px;background:linear-gradient(90deg,#00996e 0px,#02995b 187px,#6f9950 255px,#99974a 278px,#996b2f 307px,#994418 352px,#992302 427px,#991300 490px)"></i>
<i class="r" style="left:1166px;top:423px;width:495px;background:linear-gradient(90deg,#009970 0px,#02995f 186px,#6f9954 253px,#99964e 276px,#996a32 305px,#994319 350px,#992204 425px,#991100 494px)"></i>
<i class="r" style="left:1167px;top:426px;width:498px;background:linear-gradient(90deg,#009973 0px,#029962 184px,#6f9958 250px,#999853 272px,#996c36 300px,#99441d 344px,#992306 417px,#991300 476px,#990f00 497px)"></i>
<i class="r" style="left:1168px;top:429px;width:501px;background:linear-gradient(90deg,#009975 0px,#039966 182px,#6f995c 247px,#999757 269px,#996b39 297px,#99441f 340px,#992308 412px,#991300 474px,#990e00 500px)"></i>
<i class="r" style="left:1169px;top:432px;width:504px;background:linear-gradient(90deg,#009978 0px,#039969 180px,#6f9961 244px,#99965b 266px,#996a3c 294px,#994321 337px,#99220a 409px,#991100 477px,#990c00 503px)"></i>
<i class="r" style="left:1169px;top:435px;width:508px;background:linear-gradient(90deg,#00997b 0px,#01996d 178px,#6e9965 241px,#999761 263px,#996b41 290px,#994425 332px,#99230c 402px,#990f00 479px,#990a00 507px)"></i>
<i class="r" style="left:1170px;top:438px;width:511px;background:linear-gradient(90deg,#00997d 0px,#029971 176px,#6e996a 238px,#999665 260px,#996a44 287px,#994327 329px,#99220e 399px,#990d00 483px,#990800 510px)"></i>
<i class="r" style="left:1171px;top:441px;width:514px;background:linear-gradient(90deg,#009980 0px,#029975 174px,#6e996f 235px,#99986b 256px,#996b49 282px,#99452b 322px,#992311 389px,#990b00 485px,#990700 513px)"></i>
<i class="r" style="left:1172px;top:444px;width:517px;background:linear-gradient(90deg,#009983 0px,#029979 172px,#6e9974 232px,#99976f 253px,#996a4c 279px,#99442d 319px,#992212 386px,#990900 489px,#990500 516px)"></i>
<i class="r" style="left:1172px;top:447px;width:521px;background:linear-gradient(90deg,#009986 0px,#02997e 171px,#6e9979 230px,#999674 251px,#99694f 277px,#99432f 317px,#992214 384px,#990800 492px,#990400 520px)"></i>
<i class="r" style="left:1173px;top:450px;width:524px;background:linear-gradient(90deg,#009989 0px,#029982 169px,#6e997e 227px,#99977b 247px,#996b55 272px,#994434 311px,#992217 376px,#990700 492px,#990200 523px)"></i>
<i class="r" style="left:1174px;top:453px;width:527px;background:linear-gradient(90deg,#00998c 0px,#039987 167px,#6e9983 224px,#99967f 244px,#996a58 269px,#994336 308px,#992218 373px,#990500 493px,#990000 526px)"></i>
<i class="r" style="left:1175px;top:456px;width:530px;background:linear-gradient(90deg,#00998f 0px,#03998b 165px,#6f9989 221px,#999786 240px,#996b5e 264px,#99453b 301px,#99231c 363px,#990602 479px,#990000 529px)"></i>
<i class="r" style="left:1175px;top:459px;width:534px;background:linear-gradient(90deg,#009992 0px,#019990 163px,#6f998f 219px,#99978c 238px,#996a62 262px,#99443d 299px,#99221e 361px,#990603 477px,#990000 533px)"></i>
<i class="r" style="left:1176px;top:462px;width:536px;background:linear-gradient(90deg,#009996 0px,#019995 161px,#6f9995 216px,#999893 234px,#996c68 257px,#994542 293px,#992321 353px,#990605 465px,#990000 535px)"></i>
<i class="r" style="left:1177px;top:465px;width:539px;background:linear-gradient(90deg,#009999 0px,#029899 159px,#6e9799 213px,#999496 232px,#99696b 255px,#994344 291px,#992223 351px,#990506 464px,#990000 538px)"></i>
<i class="r" style="left:1178px;top:468px;width:542px;background:linear-gradient(90deg,#009599 0px,#029399 157px,#6e9199 212px,#998f97 231px,#99646a 255px,#993f43 292px,#991f22 354px,#990306 470px,#990000 541px)"></i>
<i class="r" style="left:1178px;top:471px;width:547px;background:linear-gradient(90deg,#009299 0px,#028e99 156px,#6f8b99 212px,#998997 231px,#99606b 255px,#993c44 292px,#991d23 354px,#990206 470px,#990000 546px)"></i>
<i class="r" style="left:1179px;top:474px;width:549px;background:linear-gradient(90deg,#008e99 0px,#028999 154px,#6f8699 211px,#998398 230px,#995c6c 254px,#993945 291px,#991b24 353px,#990107 469px,#990000 548px)"></i>
<i class="r" style="left:1180px;top:477px;width:552px;background:linear-gradient(90deg,#008b99 0px,#028499 152px,#6f8099 210px,#997c96 230px,#99566a 255px,#993443 294px,#991722 359px,#990007 475px,#990000 551px)"></i>
<i class="r" style="left:1181px;top:480px;width:555px;background:linear-gradient(90deg,#008899 0px,#028099 150px,#6f7b99 209px,#997796 229px,#99526b 254px,#993244 293px,#991623 358px,#990008 469px,#990000 554px)"></i>
<i class="r" style="left:1181px;top:483px;width:559px;background:linear-gradient(90deg,#008499 0px,#037c99 149px,#707699 209px,#997297 229px,#994e6a 255px,#992e44 295px,#991322 362px,#990009 465px,#990000 557px,#990000 558px)"></i>
<i class="r" style="left:1182px;top:486px;width:562px;background:linear-gradient(90deg,#008199 0px,#037799 147px,#707199 208px,#996d97 228px,#994a6b 254px,#992c45 294px,#991123 361px,#99000b 458px,#990000 559px,#990000 561px)"></i>
<i class="r" style="left:1183px;top:489px;width:565px;background:linear-gradient(90deg,#007e99 0px,#037399 145px,#6e6c99 206px,#996898 227px,#99476c 253px,#992945 294px,#990f23 362px,#99000d 450px,#990000 561px,#990000 564px)"></i>
<i class="r" style="left:1184px;top:492px;width:568px;background:linear-gradient(90deg,#007b99 0px,#036f99 143px,#6e6799 205px,#996296 227px,#99416a 254px,#992544 296px,#990c22 366px,#99000f 443px,#990000 564px,#990000 567px)"></i>
<i class="r" style="left:1185px;top:495px;width:571px;background:linear-gradient(90deg,#007899 0px,#016c99 140px,#6f6399 204px,#995d96 226px,#993e6b 253px,#992344 295px,#990b23 366px,#990011 436px,#990000 567px,#990000 570px)"></i>
<i class="r" style="left:1186px;top:498px;width:574px;background:linear-gradient(90deg,#007599 0px,#026899 138px,#6f5e99 203px,#995997 225px,#993a6a 253px,#992044 296px,#990823 368px,#990012 431px,#990000 571px,#990000 573px)"></i>
<i class="r" style="left:1187px;top:501px;width:574px;background:linear-gradient(90deg,#007299 0px,#026499 136px,#6f5a99 202px,#995497 224px,#99376b 252px,#991d44 296px,#990623 369px,#990014 427px,#990000 573px)"></i>
<i class="r" style="left:1188px;top:504px;width:573px;background:linear-gradient(90deg,#006f99 0px,#026199 134px,#6f5699 201px,#995098 223px,#99346c 251px,#991b45 295px,#990523 368px,#990014 427px,#990000 572px)"></i>
<i class="r" style="left:1188px;top:507px;width:573px;background:linear-gradient(90deg,#006c99 0px,#025d99 133px,#705199 201px,#994b96 224px,#99306a 253px,#991844 298px,#990222 374px,#990006 516px,#990000 572px)"></i>
<i class="r" style="left:1189px;top:510px;width:569px;background:linear-gradient(90deg,#006999 0px,#025a99 131px,#704d99 200px,#994796 223px,#992d6b 252px,#991544 298px,#990123 374px,#990006 517px,#990000 568px)"></i>
<i class="r" style="left:1190px;top:513px;width:560px;background:linear-gradient(90deg,#006699 0px,#025699 129px,#704999 199px,#994397 222px,#99296a 252px,#991344 298px,#990023 375px,#990006 520px,#990001 559px)"></i>
<i class="r" style="left:1191px;top:516px;width:550px;background:linear-gradient(90deg,#006399 0px,#025399 127px,#6e4699 197px,#993f97 221px,#99276b 251px,#991144 298px,#990024 373px,#990007 516px,#990003 549px)"></i>
<i class="r" style="left:1192px;top:519px;width:541px;background:linear-gradient(90deg,#006099 0px,#035099 125px,#6f4299 196px,#993b98 220px,#99246c 250px,#990f45 297px,#990027 365px,#99000a 501px,#990004 540px)"></i>
<i class="r" style="left:1193px;top:522px;width:531px;background:linear-gradient(90deg,#005e99 0px,#034d99 123px,#6f3e99 195px,#993796 220px,#99206a 251px,#990c44 299px,#990029 359px,#99000c 490px,#990006 530px)"></i>
<i class="r" style="left:1194px;top:525px;width:521px;background:linear-gradient(90deg,#005b99 0px,#034a99 121px,#6f3b99 194px,#993396 219px,#991d6a 251px,#990943 300px,#99002c 352px,#99000e 477px,#990008 520px)"></i>
<i class="r" style="left:1195px;top:528px;width:512px;background:linear-gradient(90deg,#005899 0px,#034799 119px,#6f3799 193px,#993097 218px,#991a6b 250px,#990744 300px,#99002e 347px,#990010 469px,#990009 511px)"></i>
<i class="r" style="left:1196px;top:531px;width:502px;background:linear-gradient(90deg,#005699 0px,#034499 117px,#703499 192px,#992c97 217px,#99186b 249px,#990544 299px,#99002f 344px,#990011 464px,#99000b 501px)"></i>
<i class="r" style="left:1197px;top:534px;width:493px;background:linear-gradient(90deg,#005399 0px,#034299 115px,#703099 191px,#992896 217px,#99146a 250px,#990343 301px,#990022 387px,#99000d 492px)"></i>
<i class="r" style="left:1198px;top:537px;width:483px;background:linear-gradient(90deg,#005099 0px,#023f99 112px,#702d99 190px,#992596 216px,#99126a 249px,#990144 301px,#990022 388px,#99000f 482px)"></i>
<i class="r" style="left:1199px;top:540px;width:474px;background:linear-gradient(90deg,#004e99 0px,#023c99 110px,#6f2a99 188px,#992296 215px,#990f6a 249px,#990043 302px,#990022 390px,#990011 473px)"></i>
<i class="r" style="left:1200px;top:543px;width:464px;background:linear-gradient(90deg,#004b99 0px,#023a99 108px,#6f2799 187px,#991e97 214px,#990d6b 248px,#990045 298px,#990024 384px,#990013 463px)"></i>
<i class="r" style="left:1201px;top:546px;width:455px;background:linear-gradient(90deg,#004999 0px,#023799 106px,#6f2499 186px,#991b97 213px,#990a6b 247px,#99004a 290px,#990028 371px,#990015 454px)"></i>
<i class="r" style="left:1202px;top:549px;width:445px;background:linear-gradient(90deg,#004699 0px,#023599 104px,#6f2199 185px,#991896 213px,#99076a 248px,#99004d 285px,#99002a 364px,#990017 444px)"></i>
<i class="r" style="left:1203px;top:552px;width:436px;background:linear-gradient(90deg,#004499 0px,#023299 102px,#6f1e99 184px,#991496 212px,#99056a 247px,#99004e 284px,#99002b 363px,#990019 435px)"></i>
<i class="r" style="left:1205px;top:555px;width:425px;background:linear-gradient(90deg,#004199 0px,#023099 99px,#6f1b99 182px,#991197 210px,#99026a 246px,#990043 302px,#990022 396px,#99001b 424px)"></i>
<i class="r" style="left:1206px;top:558px;width:416px;background:linear-gradient(90deg,#003f99 0px,#032e99 97px,#701899 181px,#990f97 209px,#99006b 245px,#990044 301px,#990022 395px,#99001e 415px)"></i>
<i class="r" style="left:1207px;top:561px;width:406px;background:linear-gradient(90deg,#003d99 0px,#032b99 95px,#701599 180px,#990c97 208px,#99006b 244px,#990045 300px,#990023 394px,#990020 405px)"></i>
<i class="r" style="left:1208px;top:564px;width:396px;background:linear-gradient(90deg,#003a99 0px,#032999 93px,#701299 179px,#990896 208px,#990070 239px,#990048 293px,#990026 383px,#990023 395px)"></i>
<i class="r" style="left:1210px;top:567px;width:386px;background:linear-gradient(90deg,#003899 0px,#032799 90px,#6f1099 176px,#990596 206px,#990072 235px,#99004b 288px,#990028 376px,#990026 385px)"></i>
<i class="r" style="left:1211px;top:570px;width:376px;background:linear-gradient(90deg,#003599 0px,#032599 88px,#6f0d99 175px,#990297 205px,#99006a 243px,#990043 302px,#990029 375px)"></i>
<i class="r" style="left:1212px;top:573px;width:367px;background:linear-gradient(90deg,#003399 0px,#032399 86px,#6f0b99 174px,#990097 204px,#99006b 242px,#990044 301px,#99002c 366px)"></i>
<i class="r" style="left:1214px;top:576px;width:356px;background:linear-gradient(90deg,#003199 0px,#022199 82px,#6f0899 172px,#990097 202px,#99006b 240px,#990045 299px,#99002f 355px)"></i>
<i class="r" style="left:1215px;top:579px;width:347px;background:linear-gradient(90deg,#002e99 0px,#021f99 80px,#6f0599 171px,#990096 202px,#99006a 241px,#990043 302px,#990032 346px)"></i>
<i class="r" style="left:1216px;top:582px;width:337px;background:linear-gradient(90deg,#002c99 0px,#021d99 78px,#700399 170px,#990096 201px,#99006a 241px,#990043 303px,#990036 336px)"></i>
<i class="r" style="left:1217px;top:585px;width:328px;background:linear-gradient(90deg,#002a99 0px,#021b99 76px,#700099 169px,#990097 200px,#99006a 240px,#990044 302px,#990039 327px)"></i>
<i class="r" style="left:1219px;top:588px;width:317px;background:linear-gradient(90deg,#002899 0px,#021999 73px,#700099 167px,#990097 198px,#99006b 238px,#990044 300px,#99003d 316px)"></i>
<i class="r" style="left:1220px;top:591px;width:308px;background:linear-gradient(90deg,#002699 0px,#021799 71px,#6c0099 163px,#990096 198px,#99006a 239px,#990043 303px,#990041 307px)"></i>
<i class="r" style="left:1222px;top:594px;width:297px;background:linear-gradient(90deg,#002399 0px,#031599 68px,#630099 154px,#990096 196px,#99006a 237px,#990046 296px)"></i>
<i class="r" style="left:1223px;top:597px;width:288px;background:linear-gradient(90deg,#002199 0px,#031399 66px,#5b0099 146px,#990096 195px,#99006a 237px,#99004a 287px)"></i>
<i class="r" style="left:1225px;top:600px;width:277px;background:linear-gradient(90deg,#001f99 0px,#031199 63px,#530099 137px,#990097 193px,#99006a 235px,#99004f 276px)"></i>
<i class="r" style="left:1226px;top:603px;width:268px;background:linear-gradient(90deg,#001d99 0px,#031099 61px,#4d0099 130px,#990097 192px,#99006b 234px,#990054 267px)"></i>
<i class="r" style="left:1228px;top:606px;width:257px;background:linear-gradient(90deg,#001a99 0px,#030e99 58px,#450099 121px,#990097 190px,#99006b 233px,#99005a 256px)"></i>
<i class="r" style="left:1229px;top:609px;width:247px;background:linear-gradient(90deg,#001899 0px,#030c99 56px,#3e0099 113px,#990096 190px,#99006a 233px,#990061 246px)"></i>
<i class="r" style="left:1231px;top:612px;width:237px;background:linear-gradient(90deg,#001699 0px,#030a99 53px,#380099 105px,#990096 188px,#99006a 232px,#990067 236px)"></i>
<i class="r" style="left:1232px;top:615px;width:227px;background:linear-gradient(90deg,#001499 0px,#030999 51px,#320099 98px,#990097 187px,#99006e 226px)"></i>
<i class="r" style="left:1234px;top:618px;width:217px;background:linear-gradient(90deg,#001299 0px,#030799 48px,#2f0099 92px,#910099 177px,#990094 187px,#990076 216px)"></i>
<i class="r" style="left:1236px;top:621px;width:206px;background:linear-gradient(90deg,#001099 0px,#030599 45px,#300099 90px,#900099 175px,#990095 185px,#99007e 205px)"></i>
<i class="r" style="left:1238px;top:624px;width:196px;background:linear-gradient(90deg,#000d99 0px,#030399 42px,#6c0099 143px,#990096 182px,#990087 195px)"></i>
<i class="r" style="left:1240px;top:627px;width:185px;background:linear-gradient(90deg,#000b99 0px,#020299 38px,#6f0099 144px,#990096 180px,#990091 184px)"></i>
<i class="r" style="left:1242px;top:630px;width:175px;background:linear-gradient(90deg,#000999 0px,#020099 35px,#6f0099 142px,#960099 174px)"></i>
<i class="r" style="left:1244px;top:633px;width:164px;background:linear-gradient(90deg,#000799 0px,#030099 32px,#700099 140px,#8b0099 163px)"></i>
<i class="r" style="left:1246px;top:636px;width:154px;background:linear-gradient(90deg,#000499 0px,#030099 29px,#700099 138px,#810099 153px)"></i>
<i class="r" style="left:1248px;top:639px;width:143px;background:linear-gradient(90deg,#000299 0px,#030099 26px,#700099 136px,#770099 142px)"></i>
<i class="r" style="left:1251px;top:642px;width:132px;background:linear-gradient(90deg,#000099 0px,#030099 22px,#6e0099 131px)"></i>
<i class="r" style="left:1253px;top:645px;width:121px;background:linear-gradient(90deg,#000099 0px,#030099 19px,#640099 120px)"></i>
<i class="r" style="left:1256px;top:648px;width:109px;background:linear-gradient(90deg,#000099 0px,#040099 16px,#5b0099 108px)"></i>
<i class="r" style="left:1259px;top:651px;width:98px;background:linear-gradient(90deg,#000099 0px,#050099 13px,#530099 97px)"></i>
<i class="r" style="left:1263px;top:654px;width:85px;background:linear-gradient(90deg,#000099 0px,#4a0099 84px)"></i>
<i class="r" style="left:1266px;top:657px;width:74px;background:linear-gradient(90deg,#010099 0px,#430099 73px)"></i>
<i class="r" style="left:1269px;top:660px;width:62px;background:linear-gradient(90deg,#050099 0px,#3b0099 61px)"></i>
<i class="r" style="left:1274px;top:663px;width:49px;background:linear-gradient(90deg,#0a0099 0px,#340099 48px)"></i>
<i class="r" style="left:1279px;top:666px;width:35px;background:linear-gradient(90deg,#0f0099 0px,#2d0099 34px)"></i>
<i class="r" style="left:1283px;top:669px;width:23px;background:linear-gradient(90deg,#140099 0px,#260099 22px)"></i>
</div></div>
<div class="L" style="clip-path:polygon(1676.88px 465.04px,1397.40px 297.10px,1274.10px 632.98px)"><div class="L" style="filter:blur(1.2px)">
<i class="r" style="left:1391px;top:293px;width:16px;background:linear-gradient(90deg,#00ff01 0px,#03ff00 9px,#0cff00 15px)"></i>
<i class="r" style="left:1390px;top:296px;width:22px;background:linear-gradient(90deg,#00ff04 0px,#03ff00 9px,#16ff00 21px)"></i>
<i class="r" style="left:1389px;top:299px;width:28px;background:linear-gradient(90deg,#00ff06 0px,#03ff02 9px,#20ff00 27px)"></i>
<i class="r" style="left:1388px;top:302px;width:34px;background:linear-gradient(90deg,#00ff09 0px,#03ff05 9px,#2aff00 33px)"></i>
<i class="r" style="left:1387px;top:305px;width:40px;background:linear-gradient(90deg,#00ff0c 0px,#04ff08 9px,#2fff00 36px,#34ff00 39px)"></i>
<i class="r" style="left:1386px;top:308px;width:46px;background:linear-gradient(90deg,#00ff0e 0px,#04ff0b 9px,#38ff00 41px,#3fff00 45px)"></i>
<i class="r" style="left:1385px;top:311px;width:52px;background:linear-gradient(90deg,#00ff11 0px,#04ff0d 9px,#41ff00 46px,#49ff00 51px)"></i>
<i class="r" style="left:1384px;top:314px;width:58px;background:linear-gradient(90deg,#00ff14 0px,#04ff10 9px,#4cff00 52px,#55ff00 57px)"></i>
<i class="r" style="left:1382px;top:317px;width:65px;background:linear-gradient(90deg,#00ff17 0px,#03ff13 9px,#56ff00 58px,#60ff00 64px)"></i>
<i class="r" style="left:1381px;top:320px;width:71px;background:linear-gradient(90deg,#00ff19 0px,#03ff16 9px,#61ff00 64px,#6cff00 70px)"></i>
<i class="r" style="left:1380px;top:323px;width:77px;background:linear-gradient(90deg,#00ff1c 0px,#03ff19 9px,#6eff00 70px,#79ff00 76px)"></i>
<i class="r" style="left:1379px;top:326px;width:83px;background:linear-gradient(90deg,#00ff1f 0px,#03ff1c 9px,#7aff00 76px,#86ff00 82px)"></i>
<i class="r" style="left:1378px;top:329px;width:89px;background:linear-gradient(90deg,#00ff22 0px,#04ff1e 9px,#87ff00 82px,#93ff00 88px)"></i>
<i class="r" style="left:1377px;top:332px;width:95px;background:linear-gradient(90deg,#00ff25 0px,#04ff21 9px,#95ff00 88px,#a1ff00 94px)"></i>
<i class="r" style="left:1376px;top:335px;width:101px;background:linear-gradient(90deg,#00ff28 0px,#04ff24 9px,#97ff00 88px,#b0ff00 100px)"></i>
<i class="r" style="left:1375px;top:338px;width:107px;background:linear-gradient(90deg,#00ff2b 0px,#04ff27 9px,#97ff04 87px,#bfff00 106px)"></i>
<i class="r" style="left:1374px;top:341px;width:113px;background:linear-gradient(90deg,#00ff2e 0px,#04ff2a 9px,#96ff08 86px,#c4ff00 107px,#cfff00 112px)"></i>
<i class="r" style="left:1373px;top:344px;width:119px;background:linear-gradient(90deg,#00ff31 0px,#03ff2e 8px,#98ff0b 86px,#d0ff00 111px,#e0ff00 118px)"></i>
<i class="r" style="left:1371px;top:347px;width:126px;background:linear-gradient(90deg,#00ff35 0px,#03ff31 9px,#98ff0f 86px,#e0ff00 118px,#f1ff00 125px)"></i>
<i class="r" style="left:1370px;top:350px;width:132px;background:linear-gradient(90deg,#00ff38 0px,#03ff34 9px,#98ff13 85px,#f2ff00 124px,#fffd00 130px,#fffa00 131px)"></i>
<i class="r" style="left:1369px;top:353px;width:138px;background:linear-gradient(90deg,#00ff3b 0px,#04ff38 9px,#98ff17 84px,#fffe00 128px,#ffe900 137px)"></i>
<i class="r" style="left:1368px;top:356px;width:144px;background:linear-gradient(90deg,#00ff3e 0px,#04ff3b 9px,#98ff1c 83px,#fffd02 127px,#ffd900 143px)"></i>
<i class="r" style="left:1367px;top:359px;width:150px;background:linear-gradient(90deg,#00ff42 0px,#02ff3f 8px,#98ff20 82px,#fffc07 126px,#ffd600 143px,#ffca00 149px)"></i>
<i class="r" style="left:1366px;top:362px;width:156px;background:linear-gradient(90deg,#00ff45 0px,#02ff42 8px,#97ff24 81px,#fffe0c 124px,#ffcb00 147px,#ffbd00 155px)"></i>
<i class="r" style="left:1365px;top:365px;width:162px;background:linear-gradient(90deg,#00ff49 0px,#02ff46 8px,#97ff28 80px,#fffd11 123px,#ffc300 150px,#ffb100 161px)"></i>
<i class="r" style="left:1364px;top:368px;width:168px;background:linear-gradient(90deg,#00ff4c 0px,#03ff4a 8px,#97ff2d 79px,#fffe16 121px,#ffc504 147px,#ffa500 167px)"></i>
<i class="r" style="left:1363px;top:371px;width:174px;background:linear-gradient(90deg,#00ff50 0px,#03ff4d 8px,#97ff31 78px,#fffd1b 120px,#ffc408 146px,#ffa100 168px,#ff9a00 173px)"></i>
<i class="r" style="left:1362px;top:374px;width:180px;background:linear-gradient(90deg,#00ff54 0px,#03ff51 8px,#97ff36 77px,#fffc20 119px,#ffc20c 145px,#ff9900 172px,#ff9000 179px)"></i>
<i class="r" style="left:1360px;top:377px;width:187px;background:linear-gradient(90deg,#00ff58 0px,#03ff55 9px,#97ff3a 77px,#fffe26 118px,#ffc311 144px,#ff8f00 179px,#ff8700 186px)"></i>
<i class="r" style="left:1359px;top:380px;width:193px;background:linear-gradient(90deg,#00ff5c 0px,#04ff59 9px,#96ff3f 76px,#fffd2a 117px,#ffc315 142px,#ff8f01 177px,#ff7e00 192px)"></i>
<i class="r" style="left:1358px;top:383px;width:199px;background:linear-gradient(90deg,#00ff60 0px,#02ff5d 8px,#99ff44 76px,#fffe30 115px,#ffc41a 140px,#ff8f05 175px,#ff7600 198px)"></i>
<i class="r" style="left:1357px;top:386px;width:205px;background:linear-gradient(90deg,#00ff64 0px,#02ff62 8px,#98ff49 75px,#fffd35 114px,#ffc31e 139px,#ff8f09 173px,#ff7200 200px,#ff6f00 204px)"></i>
<i class="r" style="left:1356px;top:389px;width:211px;background:linear-gradient(90deg,#00ff68 0px,#02ff66 8px,#98ff4e 74px,#fffc3a 113px,#ffc323 137px,#ff8f0d 171px,#ff6b00 205px,#ff6700 210px)"></i>
<i class="r" style="left:1355px;top:392px;width:217px;background:linear-gradient(90deg,#00ff6d 0px,#02ff6a 8px,#98ff53 73px,#fffe41 111px,#ffc428 135px,#ff9011 168px,#ff6500 210px,#ff6000 216px)"></i>
<i class="r" style="left:1354px;top:395px;width:223px;background:linear-gradient(90deg,#00ff71 0px,#03ff6f 8px,#98ff58 72px,#fffc46 110px,#ffc22c 134px,#ff8e14 167px,#ff5f00 215px,#ff5a00 222px)"></i>
<i class="r" style="left:1353px;top:398px;width:229px;background:linear-gradient(90deg,#00ff76 0px,#03ff73 8px,#98ff5d 71px,#fffe4d 108px,#ffc532 131px,#ff911a 163px,#ff6203 209px,#ff5400 228px)"></i>
<i class="r" style="left:1352px;top:401px;width:235px;background:linear-gradient(90deg,#00ff7a 0px,#03ff78 8px,#98ff63 70px,#fffd52 107px,#ffc437 130px,#ff8f1d 162px,#ff6005 208px,#ff4e00 234px)"></i>
<i class="r" style="left:1351px;top:404px;width:241px;background:linear-gradient(90deg,#00ff7f 0px,#04ff7d 8px,#97ff69 69px,#ffff59 105px,#ffc43c 128px,#ff8f21 160px,#ff6009 206px,#ff4900 238px,#ff4800 240px)"></i>
<i class="r" style="left:1349px;top:407px;width:248px;background:linear-gradient(90deg,#00ff84 0px,#01ff82 8px,#97ff6e 69px,#fffe5f 105px,#ffc542 127px,#ff9026 158px,#ff610d 203px,#ff4500 243px,#ff4300 247px)"></i>
<i class="r" style="left:1348px;top:410px;width:254px;background:linear-gradient(90deg,#00ff89 0px,#02ff87 8px,#97ff74 68px,#fffc65 104px,#ffc346 126px,#ff8f2a 157px,#ff5f0f 202px,#ff4000 249px,#ff3e00 253px)"></i>
<i class="r" style="left:1347px;top:413px;width:260px;background:linear-gradient(90deg,#00ff8e 0px,#02ff8c 8px,#97ff7a 67px,#fffe6c 102px,#ffc44c 124px,#ff902f 154px,#ff6014 198px,#ff3b00 254px,#ff3900 259px)"></i>
<i class="r" style="left:1346px;top:416px;width:266px;background:linear-gradient(90deg,#00ff93 0px,#02ff91 8px,#96ff80 66px,#fffd73 101px,#ffc251 123px,#ff8e32 153px,#ff5f16 197px,#ff3700 260px,#ff3400 265px)"></i>
<i class="r" style="left:1345px;top:419px;width:272px;background:linear-gradient(90deg,#00ff99 0px,#03ff97 8px,#96ff87 65px,#ffff7b 99px,#ffc558 120px,#ff9139 149px,#ff621c 191px,#ff3701 255px,#ff3000 271px)"></i>
<i class="r" style="left:1344px;top:422px;width:278px;background:linear-gradient(90deg,#00ff9e 0px,#03ff9c 8px,#96ff8d 64px,#fffe81 98px,#ffc45d 119px,#ff8f3c 148px,#ff601f 190px,#ff3603 254px,#ff2c00 277px)"></i>
<i class="r" style="left:1343px;top:425px;width:284px;background:linear-gradient(90deg,#00ffa4 0px,#03ffa2 8px,#96ff94 63px,#fffc87 97px,#ffc262 118px,#ff8e40 147px,#ff5f22 189px,#ff3506 253px,#ff2800 283px)"></i>
<i class="r" style="left:1342px;top:428px;width:290px;background:linear-gradient(90deg,#00ffa9 0px,#03ffa8 8px,#99ff9b 63px,#fffe90 95px,#ffc56a 115px,#ff9147 143px,#ff6228 183px,#ff370b 244px,#ff2400 288px,#ff2400 289px)"></i>
<i class="r" style="left:1341px;top:431px;width:295px;background:linear-gradient(90deg,#00ffaf 0px,#04ffae 8px,#98ffa2 62px,#fffd97 94px,#ffc370 114px,#ff8f4b 142px,#ff602b 182px,#ff360d 243px,#ff2000 293px,#ff2000 294px)"></i>
<i class="r" style="left:1339px;top:434px;width:302px;background:linear-gradient(90deg,#00ffb6 0px,#01ffb4 8px,#98ffa9 62px,#ffffa0 93px,#ffc477 113px,#ff9051 140px,#ff6130 179px,#ff3711 238px,#ff1d00 299px,#ff1c00 301px)"></i>
<i class="r" style="left:1338px;top:437px;width:308px;background:linear-gradient(90deg,#00ffbc 0px,#02ffbb 8px,#98ffb0 61px,#fffda7 92px,#ffc57e 111px,#ff9057 138px,#ff6134 177px,#ff3714 236px,#ff1a00 305px,#ff1900 307px)"></i>
<i class="r" style="left:1337px;top:440px;width:314px;background:linear-gradient(90deg,#00ffc2 0px,#02ffc1 8px,#98ffb8 60px,#fffcaf 91px,#ffc383 110px,#ff8e5b 137px,#ff5f37 176px,#ff3516 235px,#ff1600 311px,#ff1500 313px)"></i>
<i class="r" style="left:1336px;top:443px;width:320px;background:linear-gradient(90deg,#00ffc9 0px,#02ffc8 8px,#97ffc0 59px,#fffeb9 89px,#ffc48b 108px,#ff9062 134px,#ff603c 172px,#ff361b 229px,#ff1300 315px,#ff1200 319px)"></i>
<i class="r" style="left:1335px;top:446px;width:326px;background:linear-gradient(90deg,#00ffd0 0px,#03ffcf 8px,#97ffc8 58px,#fffdc1 88px,#ffc291 107px,#ff8e66 133px,#ff5e40 171px,#ff351d 228px,#ff1100 319px,#ff0f00 325px)"></i>
<i class="r" style="left:1334px;top:449px;width:332px;background:linear-gradient(90deg,#00ffd7 0px,#03ffd6 8px,#97ffd0 57px,#ffffcc 86px,#ffc59b 104px,#ff916f 129px,#ff6247 165px,#ff3723 220px,#ff1203 309px,#ff0c00 331px)"></i>
<i class="r" style="left:1333px;top:452px;width:338px;background:linear-gradient(90deg,#00ffde 0px,#03ffde 8px,#97ffd9 56px,#fffdd4 85px,#ffc4a2 103px,#ff8f74 128px,#ff604b 164px,#ff3626 219px,#ff1105 308px,#ff0900 337px)"></i>
<i class="r" style="left:1332px;top:455px;width:344px;background:linear-gradient(90deg,#00ffe6 0px,#04ffe5 8px,#96ffe2 55px,#feffdf 83px,#ffc2a8 102px,#ff8d78 127px,#ff5e4e 163px,#ff3428 218px,#ff0f06 308px,#ff0600 343px)"></i>
<i class="r" style="left:1331px;top:458px;width:350px;background:linear-gradient(90deg,#00ffee 0px,#01ffed 7px,#96ffeb 54px,#fffee8 82px,#ffc5b3 99px,#ff9082 123px,#ff6256 157px,#ff372f 209px,#ff120c 293px,#ff0300 349px)"></i>
<i class="r" style="left:1330px;top:461px;width:353px;background:linear-gradient(90deg,#00fff6 0px,#01fff6 7px,#96fff4 53px,#fffcf1 81px,#ffc3ba 98px,#ff8e87 122px,#ff605a 156px,#ff3632 208px,#ff110e 293px,#ff0000 352px)"></i>
<i class="r" style="left:1328px;top:464px;width:355px;background:linear-gradient(90deg,#00fffe 0px,#02fffe 8px,#95fffe 53px,#fffffe 80px,#ffc4c4 97px,#ff9090 120px,#ff6161 153px,#ff3738 203px,#ff1213 284px,#ff0000 354px)"></i>
<i class="r" style="left:1327px;top:467px;width:356px;background:linear-gradient(90deg,#00f8ff 0px,#02f7ff 8px,#97f6ff 54px,#fff5ff 81px,#ffbdc5 98px,#ff8a91 121px,#ff5c62 155px,#ff3338 206px,#ff0f13 289px,#ff0000 355px)"></i>
<i class="r" style="left:1326px;top:470px;width:355px;background:linear-gradient(90deg,#00f0ff 0px,#02efff 8px,#98ecff 55px,#feeaff 82px,#ffb0c1 101px,#ff808e 125px,#ff545f 160px,#ff2d36 213px,#ff0a11 300px,#ff0003 351px,#ff0002 354px)"></i>
<i class="r" style="left:1325px;top:473px;width:348px;background:linear-gradient(90deg,#00e8ff 0px,#02e7ff 8px,#99e3ff 56px,#ffdefd 84px,#ffa9c2 102px,#ff798e 127px,#ff4e5f 163px,#ff2835 218px,#ff0610 307px,#ff0005 347px)"></i>
<i class="r" style="left:1324px;top:476px;width:342px;background:linear-gradient(90deg,#00e0ff 0px,#03dfff 8px,#96daff 56px,#ffd5fd 85px,#ffa2c4 103px,#ff748f 128px,#ff4b60 164px,#ff2536 219px,#ff0411 308px,#ff0008 341px)"></i>
<i class="r" style="left:1323px;top:479px;width:336px;background:linear-gradient(90deg,#00d9ff 0px,#03d8ff 8px,#97d1ff 57px,#ffccfe 86px,#ff9bc5 104px,#ff6f91 129px,#ff4762 165px,#ff2337 220px,#ff0212 309px,#ff000b 335px)"></i>
<i class="r" style="left:1322px;top:482px;width:330px;background:linear-gradient(90deg,#00d1ff 0px,#03d0ff 8px,#98c9ff 58px,#ffc3ff 87px,#ff95c6 105px,#ff6a92 130px,#ff4363 166px,#ff2039 221px,#ff0014 310px,#ff000e 329px)"></i>
<i class="r" style="left:1321px;top:485px;width:323px;background:linear-gradient(90deg,#00cbff 0px,#03c9ff 8px,#99c1ff 59px,#febbff 88px,#ff8ac2 108px,#ff618f 134px,#ff3c60 172px,#ff1a36 230px,#ff0014 313px,#ff0011 322px)"></i>
<i class="r" style="left:1320px;top:488px;width:317px;background:linear-gradient(90deg,#00c4ff 0px,#04c2ff 8px,#97b9ff 59px,#ffb0fd 90px,#ff84c4 109px,#ff5b8f 136px,#ff375f 175px,#ff1635 234px,#ff0017 308px,#ff0015 316px)"></i>
<i class="r" style="left:1319px;top:491px;width:311px;background:linear-gradient(90deg,#00bdff 0px,#04bcff 8px,#98b1ff 60px,#ffa8fd 91px,#ff7ec5 110px,#ff5790 137px,#ff3361 176px,#ff1437 235px,#ff001a 302px,#ff0018 310px)"></i>
<i class="r" style="left:1317px;top:494px;width:306px;background:linear-gradient(90deg,#00b7ff 0px,#01b5ff 8px,#99aaff 62px,#ffa0fe 93px,#ff76c3 113px,#ff5190 140px,#ff2f61 179px,#ff1137 238px,#ff001e 297px,#ff001b 305px)"></i>
<i class="r" style="left:1316px;top:497px;width:300px;background:linear-gradient(90deg,#00b1ff 0px,#02afff 8px,#9aa2ff 63px,#ff99ff 94px,#ff71c5 114px,#ff4c90 142px,#ff2b61 182px,#ff0d37 243px,#ff0021 292px,#ff001f 299px)"></i>
<i class="r" style="left:1315px;top:500px;width:293px;background:linear-gradient(90deg,#00abff 0px,#02a9ff 8px,#979bff 63px,#ff91ff 95px,#ff69c3 116px,#ff4690 144px,#ff2660 185px,#ff0936 247px,#ff0025 287px,#ff0023 292px)"></i>
<i class="r" style="left:1314px;top:503px;width:287px;background:linear-gradient(90deg,#00a5ff 0px,#02a3ff 8px,#9894ff 64px,#ff88fc 97px,#ff62c2 118px,#ff408e 147px,#ff215f 189px,#ff0535 253px,#ff0027 286px)"></i>
<i class="r" style="left:1313px;top:506px;width:281px;background:linear-gradient(90deg,#009fff 0px,#029dff 8px,#998eff 65px,#ff81fd 98px,#ff5dc3 119px,#ff3c8f 148px,#ff1e60 190px,#ff0336 254px,#ff002b 280px)"></i>
<i class="r" style="left:1312px;top:509px;width:275px;background:linear-gradient(90deg,#009aff 0px,#0398ff 8px,#9787ff 65px,#ff7afe 99px,#ff58c5 120px,#ff3891 149px,#ff1b61 191px,#ff0037 255px,#ff002f 274px)"></i>
<i class="r" style="left:1311px;top:512px;width:268px;background:linear-gradient(90deg,#0094ff 0px,#0392ff 8px,#9881ff 66px,#ff74fe 100px,#ff53c6 121px,#ff3390 151px,#ff1761 194px,#ff0038 258px,#ff0033 267px)"></i>
<i class="r" style="left:1310px;top:515px;width:262px;background:linear-gradient(90deg,#008fff 0px,#038dff 8px,#997aff 67px,#ff6dff 101px,#ff4cc4 123px,#ff2f90 153px,#ff1461 196px,#ff003c 252px,#ff0038 261px)"></i>
<i class="r" style="left:1309px;top:518px;width:256px;background:linear-gradient(90deg,#008aff 0px,#0387ff 8px,#9974ff 68px,#ff65fc 103px,#ff46c3 125px,#ff298f 156px,#ff0f5f 201px,#ff0041 246px,#ff003c 255px)"></i>
<i class="r" style="left:1308px;top:521px;width:250px;background:linear-gradient(90deg,#0085ff 0px,#0382ff 8px,#976fff 68px,#ff5ffd 104px,#ff41c4 126px,#ff2690 157px,#ff0c61 202px,#ff0046 240px,#ff0041 249px)"></i>
<i class="r" style="left:1306px;top:524px;width:245px;background:linear-gradient(90deg,#0080ff 0px,#047dff 9px,#9869ff 70px,#ff59fe 106px,#ff3bc3 129px,#ff218e 161px,#ff085f 207px,#ff004a 237px,#ff0046 244px)"></i>
<i class="r" style="left:1305px;top:527px;width:238px;background:linear-gradient(90deg,#007bff 0px,#0179ff 8px,#9963ff 71px,#ff53fe 107px,#ff37c4 130px,#ff1d90 162px,#ff0561 208px,#ff004c 237px)"></i>
<i class="r" style="left:1304px;top:530px;width:232px;background:linear-gradient(90deg,#0076ff 0px,#0274ff 8px,#9a5dff 72px,#ff4dff 108px,#ff32c5 131px,#ff1991 163px,#ff0262 209px,#ff0052 231px)"></i>
<i class="r" style="left:1303px;top:533px;width:226px;background:linear-gradient(90deg,#0072ff 0px,#026fff 8px,#9858ff 72px,#ff46fc 110px,#ff2cc2 134px,#ff148e 167px,#ff0060 214px,#ff0058 225px)"></i>
<i class="r" style="left:1302px;top:536px;width:220px;background:linear-gradient(90deg,#006dff 0px,#026bff 8px,#9853ff 73px,#ff40fd 111px,#ff27c3 135px,#ff108f 168px,#ff0067 208px,#ff005e 219px)"></i>
<i class="r" style="left:1301px;top:539px;width:213px;background:linear-gradient(90deg,#0069ff 0px,#0266ff 8px,#994eff 74px,#ff3bfe 112px,#ff23c4 136px,#ff0c8f 170px,#ff006e 202px,#ff0065 212px)"></i>
<i class="r" style="left:1300px;top:542px;width:207px;background:linear-gradient(90deg,#0065ff 0px,#0362ff 8px,#9749ff 74px,#ff35fe 113px,#ff1fc5 137px,#ff0990 171px,#ff0073 198px,#ff006c 206px)"></i>
<i class="r" style="left:1299px;top:545px;width:201px;background:linear-gradient(90deg,#0060ff 0px,#035eff 8px,#9844ff 75px,#ff30ff 114px,#ff1ac4 139px,#ff0590 173px,#ff0075 198px,#ff0074 200px)"></i>
<i class="r" style="left:1298px;top:548px;width:195px;background:linear-gradient(90deg,#005cff 0px,#035aff 8px,#993fff 76px,#ff2afc 116px,#ff15c3 141px,#ff008f 176px,#ff007b 194px)"></i>
<i class="r" style="left:1297px;top:551px;width:189px;background:linear-gradient(90deg,#0058ff 0px,#0355ff 8px,#973aff 76px,#ff25fd 117px,#ff10c2 143px,#ff0091 176px,#ff0084 188px)"></i>
<i class="r" style="left:1295px;top:554px;width:183px;background:linear-gradient(90deg,#0055ff 0px,#0351ff 9px,#9835ff 78px,#ff20fd 119px,#ff0cc3 145px,#ff009b 171px,#ff008e 182px)"></i>
<i class="r" style="left:1294px;top:557px;width:177px;background:linear-gradient(90deg,#0051ff 0px,#034eff 9px,#9831ff 79px,#ff1bfe 120px,#ff08c4 146px,#ff00a3 167px,#ff0097 176px)"></i>
<i class="r" style="left:1293px;top:560px;width:171px;background:linear-gradient(90deg,#004dff 0px,#044aff 9px,#992cff 80px,#ff16fe 121px,#ff03c5 147px,#ff00a1 170px)"></i>
<i class="r" style="left:1292px;top:563px;width:165px;background:linear-gradient(90deg,#0049ff 0px,#0446ff 9px,#9728ff 80px,#ff10fc 123px,#ff00c2 150px,#ff00ac 164px)"></i>
<i class="r" style="left:1291px;top:566px;width:159px;background:linear-gradient(90deg,#0045ff 0px,#0243ff 8px,#9824ff 81px,#ff0bfd 124px,#ff00cc 146px,#ff00b8 158px)"></i>
<i class="r" style="left:1290px;top:569px;width:152px;background:linear-gradient(90deg,#0042ff 0px,#023fff 8px,#991fff 82px,#ff06fd 125px,#ff00d9 141px,#ff00c6 151px)"></i>
<i class="r" style="left:1289px;top:572px;width:146px;background:linear-gradient(90deg,#003eff 0px,#023bff 8px,#991bff 83px,#ff01fe 126px,#ff00d3 145px)"></i>
<i class="r" style="left:1288px;top:575px;width:140px;background:linear-gradient(90deg,#003bff 0px,#0238ff 8px,#9817ff 83px,#ff00fe 127px,#ff00e2 139px)"></i>
<i class="r" style="left:1287px;top:578px;width:134px;background:linear-gradient(90deg,#0037ff 0px,#0334ff 8px,#9813ff 84px,#ee00ff 121px,#ff00fc 129px,#ff00f3 133px)"></i>
<i class="r" style="left:1286px;top:581px;width:127px;background:linear-gradient(90deg,#0034ff 0px,#0331ff 8px,#990eff 85px,#dd00ff 115px,#f700ff 126px)"></i>
<i class="r" style="left:1284px;top:584px;width:122px;background:linear-gradient(90deg,#0031ff 0px,#032eff 9px,#970bff 86px,#cc00ff 110px,#e600ff 121px)"></i>
<i class="r" style="left:1283px;top:587px;width:116px;background:linear-gradient(90deg,#002eff 0px,#032bff 9px,#9807ff 87px,#c300ff 107px,#d500ff 115px)"></i>
<i class="r" style="left:1282px;top:590px;width:110px;background:linear-gradient(90deg,#002bff 0px,#0327ff 9px,#9902ff 88px,#c600ff 109px)"></i>
<i class="r" style="left:1281px;top:593px;width:104px;background:linear-gradient(90deg,#0028ff 0px,#0424ff 9px,#9900ff 89px,#b700ff 103px)"></i>
<i class="r" style="left:1280px;top:596px;width:97px;background:linear-gradient(90deg,#0025ff 0px,#0421ff 9px,#9200ff 86px,#a600ff 96px)"></i>
<i class="r" style="left:1279px;top:599px;width:91px;background:linear-gradient(90deg,#0022ff 0px,#041eff 9px,#8400ff 80px,#9800ff 90px)"></i>
<i class="r" style="left:1278px;top:602px;width:85px;background:linear-gradient(90deg,#001fff 0px,#041bff 9px,#7800ff 74px,#8b00ff 84px)"></i>
<i class="r" style="left:1277px;top:605px;width:79px;background:linear-gradient(90deg,#001cff 0px,#0418ff 9px,#6b00ff 68px,#7e00ff 78px)"></i>
<i class="r" style="left:1276px;top:608px;width:72px;background:linear-gradient(90deg,#0019ff 0px,#0415ff 9px,#6000ff 62px,#7000ff 71px)"></i>
<i class="r" style="left:1275px;top:611px;width:66px;background:linear-gradient(90deg,#0016ff 0px,#0412ff 9px,#5400ff 56px,#6400ff 65px)"></i>
<i class="r" style="left:1273px;top:614px;width:61px;background:linear-gradient(90deg,#0013ff 0px,#0310ff 9px,#4900ff 51px,#5900ff 60px)"></i>
<i class="r" style="left:1272px;top:617px;width:55px;background:linear-gradient(90deg,#0011ff 0px,#030dff 9px,#3f00ff 45px,#4e00ff 54px)"></i>
<i class="r" style="left:1271px;top:620px;width:49px;background:linear-gradient(90deg,#000eff 0px,#030aff 9px,#3600ff 40px,#4300ff 48px)"></i>
<i class="r" style="left:1270px;top:623px;width:42px;background:linear-gradient(90deg,#000bff 0px,#0307ff 9px,#2f00ff 36px,#3700ff 41px)"></i>
<i class="r" style="left:1269px;top:626px;width:36px;background:linear-gradient(90deg,#0008ff 0px,#0304ff 9px,#2d00ff 35px)"></i>
<i class="r" style="left:1269px;top:629px;width:29px;background:linear-gradient(90deg,#0005ff 0px,#0402ff 8px,#2300ff 28px)"></i>
<i class="r" style="left:1269px;top:632px;width:22px;background:linear-gradient(90deg,#0002ff 0px,#0400ff 7px,#1a00ff 21px)"></i>
<i class="r" style="left:1269px;top:635px;width:14px;background:linear-gradient(90deg,#0000ff 0px,#0500ff 7px,#0f00ff 13px)"></i>
</div></div>
<div class="L" style="clip-path:polygon(1601px 154px,1834px 154px,1834px 329.78px,1601px 174.54px)"><div class="L" style="filter:blur(0.8px)">
<i class="r" style="left:1601px;top:154px;width:234px;background:linear-gradient(90deg,#6e9900 0px,#999600 197px,#998e00 233px)"></i>
<i class="r" style="left:1601px;top:157px;width:234px;background:linear-gradient(90deg,#6f9900 0px,#999600 195px,#998d00 233px)"></i>
<i class="r" style="left:1601px;top:160px;width:234px;background:linear-gradient(90deg,#6f9900 0px,#999600 193px,#998d00 233px)"></i>
<i class="r" style="left:1601px;top:163px;width:234px;background:linear-gradient(90deg,#709900 0px,#999600 191px,#998c00 233px)"></i>
<i class="r" style="left:1601px;top:166px;width:234px;background:linear-gradient(90deg,#709900 0px,#999600 188px,#998c00 233px)"></i>
<i class="r" style="left:1601px;top:169px;width:234px;background:linear-gradient(90deg,#719900 0px,#999600 186px,#998b00 233px)"></i>
<i class="r" style="left:1601px;top:172px;width:234px;background:linear-gradient(90deg,#719900 0px,#999600 184px,#998b00 233px)"></i>
<i class="r" style="left:1601px;top:175px;width:234px;background:linear-gradient(90deg,#719900 0px,#999600 182px,#998a00 233px)"></i>
<i class="r" style="left:1601px;top:178px;width:234px;background:linear-gradient(90deg,#729901 0px,#999600 180px,#998a00 233px)"></i>
<i class="r" style="left:1601px;top:181px;width:234px;background:linear-gradient(90deg,#729901 0px,#999600 178px,#998900 233px)"></i>
<i class="r" style="left:1601px;top:184px;width:234px;background:linear-gradient(90deg,#739901 0px,#999600 175px,#998900 233px)"></i>
<i class="r" style="left:1601px;top:187px;width:234px;background:linear-gradient(90deg,#739901 0px,#999600 173px,#998800 233px)"></i>
<i class="r" style="left:1601px;top:190px;width:234px;background:linear-gradient(90deg,#749902 0px,#999600 171px,#998800 233px)"></i>
<i class="r" style="left:1601px;top:193px;width:234px;background:linear-gradient(90deg,#749902 0px,#999600 169px,#998800 233px)"></i>
<i class="r" style="left:1601px;top:196px;width:234px;background:linear-gradient(90deg,#749902 0px,#999600 167px,#998700 233px)"></i>
<i class="r" style="left:1601px;top:199px;width:234px;background:linear-gradient(90deg,#759903 0px,#999600 165px,#998700 233px)"></i>
<i class="r" style="left:1601px;top:202px;width:234px;background:linear-gradient(90deg,#759903 0px,#999600 162px,#998600 233px)"></i>
<i class="r" style="left:1601px;top:205px;width:234px;background:linear-gradient(90deg,#769903 0px,#999600 160px,#998600 233px)"></i>
<i class="r" style="left:1601px;top:208px;width:234px;background:linear-gradient(90deg,#769903 0px,#999600 158px,#998500 233px)"></i>
<i class="r" style="left:1601px;top:211px;width:234px;background:linear-gradient(90deg,#779904 0px,#999600 156px,#998500 233px)"></i>
<i class="r" style="left:1601px;top:214px;width:234px;background:linear-gradient(90deg,#779904 0px,#999600 154px,#998400 233px)"></i>
<i class="r" style="left:1601px;top:217px;width:234px;background:linear-gradient(90deg,#779904 0px,#999600 152px,#998400 233px)"></i>
<i class="r" style="left:1601px;top:220px;width:234px;background:linear-gradient(90deg,#789905 0px,#999600 149px,#998300 233px)"></i>
<i class="r" style="left:1601px;top:223px;width:234px;background:linear-gradient(90deg,#789905 0px,#999600 147px,#998300 233px)"></i>
<i class="r" style="left:1601px;top:226px;width:234px;background:linear-gradient(90deg,#799905 0px,#999600 145px,#998200 233px)"></i>
<i class="r" style="left:1601px;top:229px;width:234px;background:linear-gradient(90deg,#799905 0px,#999600 143px,#998200 233px)"></i>
<i class="r" style="left:1601px;top:232px;width:234px;background:linear-gradient(90deg,#7a9906 0px,#999600 141px,#998200 233px)"></i>
<i class="r" style="left:1601px;top:235px;width:234px;background:linear-gradient(90deg,#7a9906 0px,#999600 139px,#998100 233px)"></i>
<i class="r" style="left:1601px;top:238px;width:234px;background:linear-gradient(90deg,#7b9906 0px,#999600 136px,#998100 233px)"></i>
<i class="r" style="left:1601px;top:241px;width:234px;background:linear-gradient(90deg,#7b9907 0px,#999600 134px,#998000 233px)"></i>
<i class="r" style="left:1601px;top:244px;width:234px;background:linear-gradient(90deg,#7c9907 0px,#999600 132px,#998000 233px)"></i>
<i class="r" style="left:1601px;top:247px;width:234px;background:linear-gradient(90deg,#7c9907 0px,#999600 130px,#997f00 233px)"></i>
<i class="r" style="left:1601px;top:250px;width:234px;background:linear-gradient(90deg,#7d9907 0px,#999600 128px,#997f00 233px)"></i>
<i class="r" style="left:1601px;top:253px;width:234px;background:linear-gradient(90deg,#7d9908 0px,#999600 126px,#997e00 233px)"></i>
<i class="r" style="left:1601px;top:256px;width:234px;background:linear-gradient(90deg,#7d9908 0px,#999600 123px,#997e00 233px)"></i>
<i class="r" style="left:1601px;top:259px;width:234px;background:linear-gradient(90deg,#7e9908 0px,#999601 121px,#997d00 233px)"></i>
<i class="r" style="left:1601px;top:262px;width:234px;background:linear-gradient(90deg,#7e9909 0px,#999601 119px,#997d00 233px)"></i>
<i class="r" style="left:1601px;top:265px;width:234px;background:linear-gradient(90deg,#7f9909 0px,#999602 117px,#997d00 233px)"></i>
<i class="r" style="left:1601px;top:268px;width:234px;background:linear-gradient(90deg,#7f9909 0px,#999602 115px,#997c00 233px)"></i>
<i class="r" style="left:1601px;top:271px;width:234px;background:linear-gradient(90deg,#809909 0px,#999602 113px,#997c00 233px)"></i>
<i class="r" style="left:1601px;top:274px;width:234px;background:linear-gradient(90deg,#80990a 0px,#999603 111px,#997b00 233px)"></i>
<i class="r" style="left:1601px;top:277px;width:234px;background:linear-gradient(90deg,#81990a 0px,#999603 108px,#997b00 233px)"></i>
<i class="r" style="left:1601px;top:280px;width:234px;background:linear-gradient(90deg,#81990a 0px,#999604 106px,#997a00 233px)"></i>
<i class="r" style="left:1601px;top:283px;width:234px;background:linear-gradient(90deg,#82990b 0px,#999604 104px,#997a00 233px)"></i>
<i class="r" style="left:1601px;top:286px;width:234px;background:linear-gradient(90deg,#82990b 0px,#999605 102px,#997900 233px)"></i>
<i class="r" style="left:1601px;top:289px;width:234px;background:linear-gradient(90deg,#83990b 0px,#999605 100px,#997900 233px)"></i>
<i class="r" style="left:1601px;top:292px;width:234px;background:linear-gradient(90deg,#83990c 0px,#999606 98px,#997900 233px)"></i>
<i class="r" style="left:1601px;top:295px;width:234px;background:linear-gradient(90deg,#84990c 0px,#999606 96px,#997800 233px)"></i>
<i class="r" style="left:1601px;top:298px;width:234px;background:linear-gradient(90deg,#84990c 0px,#999606 93px,#997800 233px)"></i>
<i class="r" style="left:1601px;top:301px;width:234px;background:linear-gradient(90deg,#85990c 0px,#999607 91px,#997700 233px)"></i>
<i class="r" style="left:1601px;top:304px;width:234px;background:linear-gradient(90deg,#85990d 0px,#999607 89px,#997700 233px)"></i>
<i class="r" style="left:1601px;top:307px;width:234px;background:linear-gradient(90deg,#86990d 0px,#999608 87px,#997600 233px)"></i>
<i class="r" style="left:1601px;top:310px;width:234px;background:linear-gradient(90deg,#86990d 0px,#999608 85px,#997600 233px)"></i>
<i class="r" style="left:1601px;top:313px;width:234px;background:linear-gradient(90deg,#87990e 0px,#999509 83px,#997600 233px)"></i>
<i class="r" style="left:1601px;top:316px;width:234px;background:linear-gradient(90deg,#87990e 0px,#999509 81px,#997500 233px)"></i>
<i class="r" style="left:1601px;top:319px;width:234px;background:linear-gradient(90deg,#88990e 0px,#999509 79px,#997500 233px)"></i>
<i class="r" style="left:1601px;top:322px;width:234px;background:linear-gradient(90deg,#89990f 0px,#99960a 76px,#997400 233px)"></i>
<i class="r" style="left:1601px;top:325px;width:234px;background:linear-gradient(90deg,#89990f 0px,#99950a 75px,#997400 233px)"></i>
<i class="r" style="left:1601px;top:328px;width:234px;background:linear-gradient(90deg,#8a990f 0px,#99950b 73px,#997300 233px)"></i>
<i class="r" style="left:1601px;top:331px;width:234px;background:linear-gradient(90deg,#8a9910 0px,#99950b 70px,#997300 233px)"></i>
<i class="r" style="left:1601px;top:334px;width:234px;background:linear-gradient(90deg,#8b9910 0px,#99950c 68px,#997301 233px)"></i>
<i class="r" style="left:1601px;top:337px;width:234px;background:linear-gradient(90deg,#8b9910 0px,#99950c 66px,#997201 233px)"></i>
<i class="r" style="left:1601px;top:340px;width:234px;background:linear-gradient(90deg,#8c9911 0px,#99950d 64px,#997201 233px)"></i>
<i class="r" style="left:1601px;top:343px;width:234px;background:linear-gradient(90deg,#8c9911 0px,#99950d 62px,#997101 233px)"></i>
<i class="r" style="left:1601px;top:346px;width:234px;background:linear-gradient(90deg,#8d9911 0px,#99950d 60px,#997102 233px)"></i>
<i class="r" style="left:1601px;top:349px;width:234px;background:linear-gradient(90deg,#8d9912 0px,#99950e 58px,#997002 233px)"></i>
</div></div>
<div class="L" style="clip-path:polygon(1601px 174.54px,1834px 329.78px,1834px 350px,1601px 350px)"><div class="L" style="filter:blur(0.8px)">
<i class="r" style="left:1601px;top:154px;width:234px;background:linear-gradient(90deg,#b8ff00 0px,#fffc00 191px,#ffec00 233px)"></i>
<i class="r" style="left:1601px;top:157px;width:234px;background:linear-gradient(90deg,#b9ff00 0px,#fffc00 189px,#ffeb00 233px)"></i>
<i class="r" style="left:1601px;top:160px;width:234px;background:linear-gradient(90deg,#b9ff00 0px,#fffc00 187px,#ffeb00 233px)"></i>
<i class="r" style="left:1601px;top:163px;width:234px;background:linear-gradient(90deg,#baff00 0px,#fffc00 185px,#ffea00 233px)"></i>
<i class="r" style="left:1601px;top:166px;width:234px;background:linear-gradient(90deg,#bbff00 0px,#fffc00 183px,#ffe900 233px)"></i>
<i class="r" style="left:1601px;top:169px;width:234px;background:linear-gradient(90deg,#bcff00 0px,#fffc00 181px,#ffe800 233px)"></i>
<i class="r" style="left:1601px;top:172px;width:234px;background:linear-gradient(90deg,#bcff00 0px,#fffc00 178px,#ffe700 233px)"></i>
<i class="r" style="left:1601px;top:175px;width:234px;background:linear-gradient(90deg,#bdff00 0px,#fffc00 176px,#ffe700 233px)"></i>
<i class="r" style="left:1601px;top:178px;width:234px;background:linear-gradient(90deg,#beff01 0px,#fffc00 174px,#ffe600 233px)"></i>
<i class="r" style="left:1601px;top:181px;width:234px;background:linear-gradient(90deg,#beff01 0px,#fffc00 172px,#ffe500 233px)"></i>
<i class="r" style="left:1601px;top:184px;width:234px;background:linear-gradient(90deg,#bfff02 0px,#fffc00 170px,#ffe400 233px)"></i>
<i class="r" style="left:1601px;top:187px;width:234px;background:linear-gradient(90deg,#c0ff02 0px,#fffc00 168px,#ffe300 233px)"></i>
<i class="r" style="left:1601px;top:190px;width:234px;background:linear-gradient(90deg,#c1ff03 0px,#fffc00 165px,#ffe300 233px)"></i>
<i class="r" style="left:1601px;top:193px;width:234px;background:linear-gradient(90deg,#c1ff03 0px,#fffc00 163px,#ffe200 233px)"></i>
<i class="r" style="left:1601px;top:196px;width:234px;background:linear-gradient(90deg,#c2ff04 0px,#fffc00 161px,#ffe100 233px)"></i>
<i class="r" style="left:1601px;top:199px;width:234px;background:linear-gradient(90deg,#c3ff04 0px,#f7ff00 133px,#fffa00 164px,#ffe000 233px)"></i>
<i class="r" style="left:1601px;top:202px;width:234px;background:linear-gradient(90deg,#c3ff05 0px,#f3ff00 120px,#fffb00 159px,#ffe000 233px)"></i>
<i class="r" style="left:1601px;top:205px;width:234px;background:linear-gradient(90deg,#c4ff05 0px,#f1ff00 114px,#fffb00 156px,#ffdf00 233px)"></i>
<i class="r" style="left:1601px;top:208px;width:234px;background:linear-gradient(90deg,#c5ff06 0px,#f1ff00 112px,#fffb00 154px,#ffde00 233px)"></i>
<i class="r" style="left:1601px;top:211px;width:234px;background:linear-gradient(90deg,#c6ff06 0px,#f2ff00 111px,#fffb00 152px,#ffdd00 233px)"></i>
<i class="r" style="left:1601px;top:214px;width:234px;background:linear-gradient(90deg,#c6ff07 0px,#f3ff00 113px,#fffb00 150px,#ffdc00 233px)"></i>
<i class="r" style="left:1601px;top:217px;width:234px;background:linear-gradient(90deg,#c7ff07 0px,#f5ff00 114px,#fffb00 149px,#ffdc00 233px)"></i>
<i class="r" style="left:1601px;top:220px;width:234px;background:linear-gradient(90deg,#c8ff08 0px,#f7ff00 117px,#fffa00 148px,#ffdb00 233px)"></i>
<i class="r" style="left:1601px;top:223px;width:234px;background:linear-gradient(90deg,#c9ff08 0px,#f9ff00 119px,#fff900 148px,#ffda00 233px)"></i>
<i class="r" style="left:1601px;top:226px;width:234px;background:linear-gradient(90deg,#c9ff09 0px,#fbff00 123px,#fff100 166px,#ffd900 233px)"></i>
<i class="r" style="left:1601px;top:229px;width:234px;background:linear-gradient(90deg,#caff09 0px,#fdff00 126px,#ffd900 233px)"></i>
<i class="r" style="left:1601px;top:232px;width:234px;background:linear-gradient(90deg,#cbff09 0px,#fffe00 130px,#ffd800 233px)"></i>
<i class="r" style="left:1601px;top:235px;width:234px;background:linear-gradient(90deg,#ccff0a 0px,#fffc00 133px,#ffd700 233px)"></i>
<i class="r" style="left:1601px;top:238px;width:234px;background:linear-gradient(90deg,#ccff0a 0px,#fffc00 131px,#ffd600 233px)"></i>
<i class="r" style="left:1601px;top:241px;width:234px;background:linear-gradient(90deg,#cdff0b 0px,#fffc00 128px,#ffd600 233px)"></i>
<i class="r" style="left:1601px;top:244px;width:234px;background:linear-gradient(90deg,#ceff0b 0px,#fffc00 126px,#ffd500 233px)"></i>
<i class="r" style="left:1601px;top:247px;width:234px;background:linear-gradient(90deg,#cfff0c 0px,#fffc00 124px,#ffd400 233px)"></i>
<i class="r" style="left:1601px;top:250px;width:234px;background:linear-gradient(90deg,#d0ff0c 0px,#fffc00 122px,#ffd300 233px)"></i>
<i class="r" style="left:1601px;top:253px;width:234px;background:linear-gradient(90deg,#d0ff0d 0px,#fffc00 120px,#ffd300 233px)"></i>
<i class="r" style="left:1601px;top:256px;width:234px;background:linear-gradient(90deg,#d1ff0d 0px,#fffc01 118px,#ffd200 233px)"></i>
<i class="r" style="left:1601px;top:259px;width:234px;background:linear-gradient(90deg,#d2ff0e 0px,#fffc02 115px,#ffd100 233px)"></i>
<i class="r" style="left:1601px;top:262px;width:234px;background:linear-gradient(90deg,#d3ff0e 0px,#fffc02 113px,#ffd000 233px)"></i>
<i class="r" style="left:1601px;top:265px;width:234px;background:linear-gradient(90deg,#d4ff0f 0px,#fffc03 111px,#ffd000 233px)"></i>
<i class="r" style="left:1601px;top:268px;width:234px;background:linear-gradient(90deg,#d4ff0f 0px,#fffc04 109px,#ffcf00 233px)"></i>
<i class="r" style="left:1601px;top:271px;width:234px;background:linear-gradient(90deg,#d5ff10 0px,#fffc05 107px,#ffd300 218px,#ffce00 233px)"></i>
<i class="r" style="left:1601px;top:274px;width:234px;background:linear-gradient(90deg,#d6ff10 0px,#fffc05 105px,#ffd500 209px,#ffcd00 233px)"></i>
<i class="r" style="left:1601px;top:277px;width:234px;background:linear-gradient(90deg,#d7ff11 0px,#fffc06 103px,#ffd500 206px,#ffcd00 233px)"></i>
<i class="r" style="left:1601px;top:280px;width:234px;background:linear-gradient(90deg,#d8ff11 0px,#fffc07 100px,#ffd400 206px,#ffcc00 233px)"></i>
<i class="r" style="left:1601px;top:283px;width:234px;background:linear-gradient(90deg,#d8ff12 0px,#fffc08 98px,#ffd300 207px,#ffcb00 233px)"></i>
<i class="r" style="left:1601px;top:286px;width:234px;background:linear-gradient(90deg,#d9ff12 0px,#fffc08 96px,#ffd200 210px,#ffca00 233px)"></i>
<i class="r" style="left:1601px;top:289px;width:234px;background:linear-gradient(90deg,#daff13 0px,#fffc09 94px,#ffd000 213px,#ffca00 233px)"></i>
<i class="r" style="left:1601px;top:292px;width:234px;background:linear-gradient(90deg,#dbff13 0px,#fffc0a 92px,#ffce00 216px,#ffc900 233px)"></i>
<i class="r" style="left:1601px;top:295px;width:234px;background:linear-gradient(90deg,#dcff14 0px,#fffc0b 90px,#ffcd00 219px,#ffc800 233px)"></i>
<i class="r" style="left:1601px;top:298px;width:234px;background:linear-gradient(90deg,#ddff14 0px,#fffc0b 87px,#ffcb00 223px,#ffc800 233px)"></i>
<i class="r" style="left:1601px;top:301px;width:234px;background:linear-gradient(90deg,#ddff15 0px,#fffc0c 85px,#ffc900 227px,#ffc700 233px)"></i>
<i class="r" style="left:1601px;top:304px;width:234px;background:linear-gradient(90deg,#deff15 0px,#fffc0d 83px,#ffc700 231px,#ffc600 233px)"></i>
<i class="r" style="left:1601px;top:307px;width:234px;background:linear-gradient(90deg,#dfff16 0px,#fffc0e 81px,#ffc500 233px)"></i>
<i class="r" style="left:1601px;top:310px;width:234px;background:linear-gradient(90deg,#e0ff16 0px,#fffc0e 79px,#ffc500 233px)"></i>
<i class="r" style="left:1601px;top:313px;width:234px;background:linear-gradient(90deg,#e1ff17 0px,#fffc0f 77px,#ffc400 233px)"></i>
<i class="r" style="left:1601px;top:316px;width:234px;background:linear-gradient(90deg,#e2ff17 0px,#fffc10 74px,#ffc300 233px)"></i>
<i class="r" style="left:1601px;top:319px;width:234px;background:linear-gradient(90deg,#e3ff18 0px,#fffc11 72px,#ffc200 233px)"></i>
<i class="r" style="left:1601px;top:322px;width:234px;background:linear-gradient(90deg,#e4ff18 0px,#fffc11 70px,#ffc200 233px)"></i>
<i class="r" style="left:1601px;top:325px;width:234px;background:linear-gradient(90deg,#e4ff19 0px,#fffc12 68px,#ffc100 232px,#ffc100 233px)"></i>
<i class="r" style="left:1601px;top:328px;width:234px;background:linear-gradient(90deg,#e5ff19 0px,#fffc13 66px,#ffc100 230px,#ffc000 233px)"></i>
<i class="r" style="left:1601px;top:331px;width:234px;background:linear-gradient(90deg,#e6ff1a 0px,#fffc14 64px,#ffc101 227px,#ffc000 233px)"></i>
<i class="r" style="left:1601px;top:334px;width:234px;background:linear-gradient(90deg,#e7ff1b 0px,#fffc14 62px,#ffc102 225px,#ffbf01 233px)"></i>
<i class="r" style="left:1601px;top:337px;width:234px;background:linear-gradient(90deg,#e8ff1b 0px,#fffc15 59px,#ffc102 222px,#ffbe01 233px)"></i>
<i class="r" style="left:1601px;top:340px;width:234px;background:linear-gradient(90deg,#e9ff1c 0px,#fffc16 57px,#ffc203 219px,#ffbe02 233px)"></i>
<i class="r" style="left:1601px;top:343px;width:234px;background:linear-gradient(90deg,#eaff1c 0px,#fffc17 55px,#ffc104 217px,#ffbd02 233px)"></i>
<i class="r" style="left:1601px;top:346px;width:234px;background:linear-gradient(90deg,#ebff1d 0px,#fffc17 53px,#ffc104 215px,#ffbc03 233px)"></i>
<i class="r" style="left:1601px;top:349px;width:234px;background:linear-gradient(90deg,#ecff1d 0px,#fffc18 51px,#ffc105 213px,#ffbb03 233px)"></i>
</div></div>
<svg width="1920" height="1039" viewBox="0 0 1920 1039">
<rect x="1389.3" y="288.9" width="13" height="13" fill="#fff" fill-opacity="0.12" stroke="#fff" stroke-width="1.6"/>
<rect x="1392.4" y="325.3" width="13" height="13" fill="#fff" fill-opacity="0.12" stroke="#fff" stroke-width="1.6"/>
<rect x="1394.1" y="358.8" width="13" height="13" fill="#fff" fill-opacity="0.12" stroke="#fff" stroke-width="1.6"/>
<rect x="1396.7" y="390.1" width="13" height="13" fill="#fff" fill-opacity="0.12" stroke="#fff" stroke-width="1.6"/>
<rect x="1398.4" y="423.4" width="13" height="13" fill="#fff" fill-opacity="0.12" stroke="#fff" stroke-width="1.6"/>
<rect x="1489.0" y="348.5" width="13" height="13" fill="#fff" fill-opacity="0.12" stroke="#fff" stroke-width="1.6"/>
<rect x="1470.1" y="371.7" width="13" height="13" fill="#fff" fill-opacity="0.12" stroke="#fff" stroke-width="1.6"/>
<rect x="1453.9" y="391.8" width="13" height="13" fill="#fff" fill-opacity="0.12" stroke="#fff" stroke-width="1.6"/>
<rect x="1436.3" y="413.0" width="13" height="13" fill="#fff" fill-opacity="0.12" stroke="#fff" stroke-width="1.6"/>
<rect x="1418.9" y="435.5" width="13" height="13" fill="#fff" fill-opacity="0.12" stroke="#fff" stroke-width="1.6"/>
<rect x="1328.0" y="459.0" width="13" height="13" fill="#fff" fill-opacity="0.12" stroke="#fff" stroke-width="1.6"/>
<rect x="1343.0" y="459.0" width="13" height="13" fill="#fff" fill-opacity="0.12" stroke="#fff" stroke-width="1.6"/>
<rect x="1358.0" y="459.0" width="13" height="13" fill="#fff" fill-opacity="0.12" stroke="#fff" stroke-width="1.6"/>
<rect x="1372.0" y="459.0" width="13" height="13" fill="#fff" fill-opacity="0.12" stroke="#fff" stroke-width="1.6"/>
<rect x="1384.0" y="459.0" width="13" height="13" fill="#fff" fill-opacity="0.12" stroke="#fff" stroke-width="1.6"/>
<rect x="1453.5" y="457.1" width="13" height="13" fill="#fff" fill-opacity="0.12" stroke="#fff" stroke-width="1.6"/>
<rect x="1508.4" y="457.1" width="13" height="13" fill="#fff" fill-opacity="0.12" stroke="#fff" stroke-width="1.6"/>
<rect x="1557.4" y="457.1" width="13" height="13" fill="#fff" fill-opacity="0.12" stroke="#fff" stroke-width="1.6"/>
<rect x="1609.5" y="457.1" width="13" height="13" fill="#fff" fill-opacity="0.12" stroke="#fff" stroke-width="1.6"/>
<rect x="1669.1" y="457.1" width="13" height="13" fill="#fff" fill-opacity="0.12" stroke="#fff" stroke-width="1.6"/>
<rect x="1373.7" y="492.4" width="13" height="13" fill="#fff" fill-opacity="0.12" stroke="#fff" stroke-width="1.6"/>
<rect x="1347.4" y="525.3" width="13" height="13" fill="#fff" fill-opacity="0.12" stroke="#fff" stroke-width="1.6"/>
<rect x="1321.4" y="557.0" width="13" height="13" fill="#fff" fill-opacity="0.12" stroke="#fff" stroke-width="1.6"/>
<rect x="1295.5" y="588.5" width="13" height="13" fill="#fff" fill-opacity="0.12" stroke="#fff" stroke-width="1.6"/>
<rect x="1266.4" y="625.5" width="13" height="13" fill="#fff" fill-opacity="0.12" stroke="#fff" stroke-width="1.6"/>
<rect x="1402.5" y="480.3" width="13" height="13" fill="#fff" fill-opacity="0.12" stroke="#fff" stroke-width="1.6"/>
<rect x="1403.7" y="503.3" width="13" height="13" fill="#fff" fill-opacity="0.12" stroke="#fff" stroke-width="1.6"/>
<rect x="1403.7" y="522.4" width="13" height="13" fill="#fff" fill-opacity="0.12" stroke="#fff" stroke-width="1.6"/>
<rect x="1405.5" y="544.0" width="13" height="13" fill="#fff" fill-opacity="0.12" stroke="#fff" stroke-width="1.6"/>
<rect x="1407.2" y="567.1" width="13" height="13" fill="#fff" fill-opacity="0.12" stroke="#fff" stroke-width="1.6"/>
<rect x="1400.5" y="458" width="14" height="14" fill="#fff" fill-opacity="0.5" stroke="#111" stroke-width="2"/>
<circle cx="1391.5" cy="297.1" r="4.7" fill="#528f52" stroke="#0d240d" stroke-width="1.5"/>
<circle cx="1392.8" cy="330.7" r="4.7" fill="#57b85d" stroke="#0f3311" stroke-width="1.5"/>
<circle cx="1397.7" cy="362.5" r="4.7" fill="#65b868" stroke="#143315" stroke-width="1.5"/>
<circle cx="1401.6" cy="395.7" r="4.7" fill="#76b878" stroke="#1a331b" stroke-width="1.5"/>
<circle cx="1403.1" cy="431.8" r="4.7" fill="#8eb892" stroke="#233325" stroke-width="1.5"/>
<circle cx="1495.6" cy="356.8" r="4.7" fill="#b8b752" stroke="#33330d" stroke-width="1.5"/>
<circle cx="1478.8" cy="377.4" r="4.7" fill="#b8b760" stroke="#333312" stroke-width="1.5"/>
<circle cx="1462.6" cy="397.6" r="4.7" fill="#b8b76f" stroke="#333318" stroke-width="1.5"/>
<circle cx="1443.6" cy="420.5" r="4.7" fill="#b7b883" stroke="#33331f" stroke-width="1.5"/>
<circle cx="1423.9" cy="445.0" r="4.7" fill="#b7b89d" stroke="#333329" stroke-width="1.5"/>
<circle cx="1330.8" cy="467.9" r="4.7" fill="#528d8f" stroke="#0d2324" stroke-width="1.5"/>
<circle cx="1343.4" cy="467.9" r="4.7" fill="#5db5b8" stroke="#113233" stroke-width="1.5"/>
<circle cx="1360.0" cy="467.9" r="4.7" fill="#71b5b8" stroke="#193233" stroke-width="1.5"/>
<circle cx="1375.7" cy="467.9" r="4.7" fill="#86b5b8" stroke="#213233" stroke-width="1.5"/>
<circle cx="1389.8" cy="467.9" r="4.7" fill="#9bb5b8" stroke="#283233" stroke-width="1.5"/>
<circle cx="1462.7" cy="466.6" r="4.7" fill="#b88182" stroke="#331f1f" stroke-width="1.5"/>
<circle cx="1528.0" cy="465.0" r="4.7" fill="#b86968" stroke="#331515" stroke-width="1.5"/>
<circle cx="1579.9" cy="465.0" r="4.7" fill="#b85e5e" stroke="#331111" stroke-width="1.5"/>
<circle cx="1632.3" cy="465.0" r="4.7" fill="#b85656" stroke="#330f0f" stroke-width="1.5"/>
<circle cx="1683.0" cy="465.0" r="4.7" fill="#8f5252" stroke="#240d0d" stroke-width="1.5"/>
<circle cx="1378.5" cy="502.6" r="4.7" fill="#8f8fb8" stroke="#242433" stroke-width="1.5"/>
<circle cx="1351.3" cy="537.2" r="4.7" fill="#7777b8" stroke="#1b1b33" stroke-width="1.5"/>
<circle cx="1322.4" cy="572.5" r="4.7" fill="#6666b8" stroke="#141433" stroke-width="1.5"/>
<circle cx="1295.9" cy="604.2" r="4.7" fill="#5a5bb8" stroke="#101033" stroke-width="1.5"/>
<circle cx="1269.9" cy="637.1" r="4.7" fill="#52528f" stroke="#0d0d24" stroke-width="1.5"/>
<circle cx="1407.6" cy="489.9" r="4.7" fill="#b598b8" stroke="#322733" stroke-width="1.5"/>
<circle cx="1409.0" cy="514.2" r="4.7" fill="#b580b8" stroke="#321e33" stroke-width="1.5"/>
<circle cx="1412.0" cy="533.2" r="4.7" fill="#b86fb8" stroke="#331833" stroke-width="1.5"/>
<circle cx="1413.1" cy="556.0" r="4.7" fill="#b75eb8" stroke="#331133" stroke-width="1.5"/>
<circle cx="1414.9" cy="576.5" r="4.7" fill="#8f528f" stroke="#240d24" stroke-width="1.5"/>
<circle cx="1406.5" cy="466.3" r="4.8" fill="#fff" stroke="#222" stroke-width="1.6"/>
<rect x="1600.5" y="153.5" width="234" height="197" fill="none" stroke="#a8a8a8" stroke-width="2"/>
<rect x="1598.5" y="151.5" width="238" height="201" fill="none" stroke="#151515" stroke-width="2"/>
<rect x="1709.5" y="244.5" width="13" height="13" fill="#fff" fill-opacity="0.12" stroke="#fff" stroke-width="1.6"/>
<circle cx="1718.8" cy="263.1" r="4.7" fill="#b8b652" stroke="#33320d" stroke-width="1.5"/>
</svg></body></html>
